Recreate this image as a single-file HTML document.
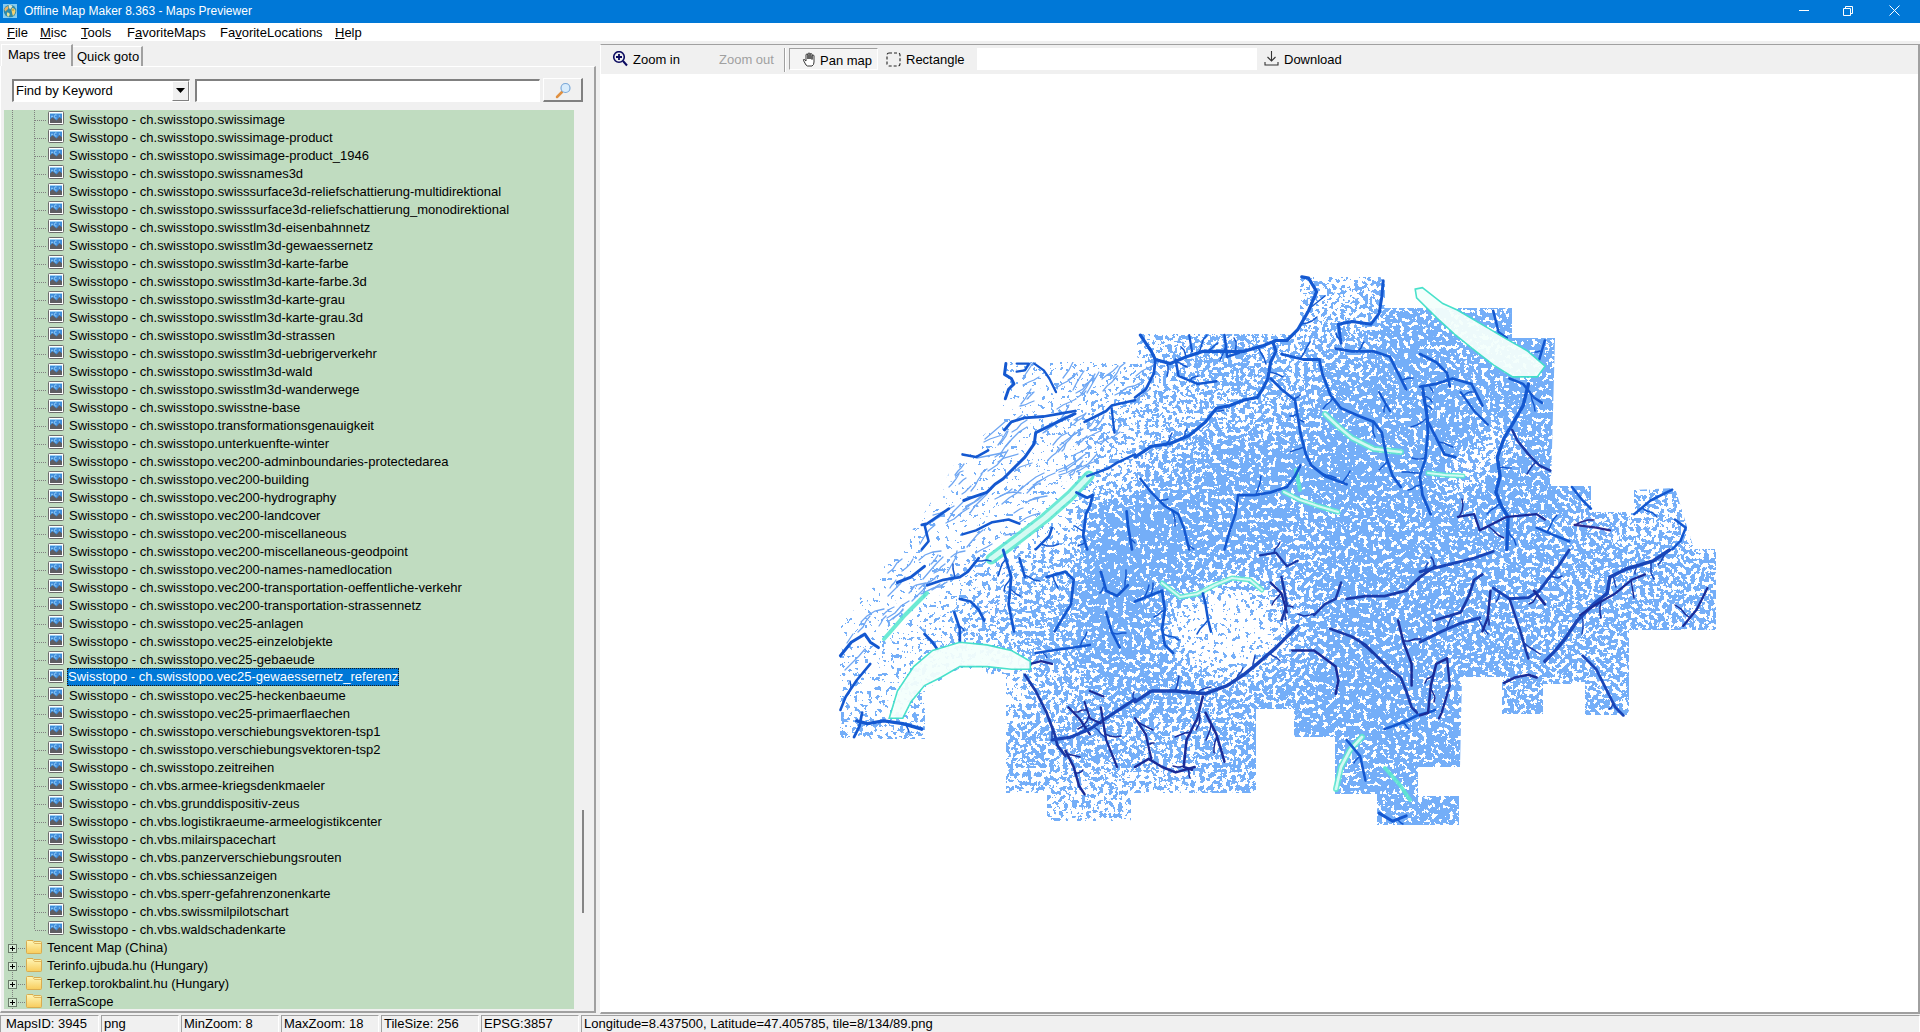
<!DOCTYPE html>
<html><head><meta charset="utf-8">
<style>
*{margin:0;padding:0;box-sizing:border-box}
html,body{width:1920px;height:1032px;overflow:hidden;background:#f0f0f0;font-family:"Liberation Sans",sans-serif;font-size:13px;color:#000}
.a{position:absolute}
#title{left:0;top:0;width:1920px;height:23px;background:#0078d7;color:#fff}
#title .tx{left:24px;top:4px;font-size:12px;white-space:nowrap}
#menu{left:0;top:23px;width:1920px;height:18px;background:#fff}
#menu span{position:absolute;top:2px;white-space:nowrap}
u{text-decoration:underline;text-underline-offset:1px;text-decoration-thickness:1px}
#tabs .tab{position:absolute;white-space:nowrap}
#tree{left:4px;top:110px;width:570px;height:899px;background:#c0dcc0;overflow:hidden}
.r{position:absolute;left:0;height:18px;width:570px}
.r .t{position:absolute;left:64px;top:1px;white-space:nowrap;font-size:13px;line-height:16px;padding:0 1px}
.r .t2{position:absolute;left:43px;top:1px;white-space:nowrap;font-size:13px;line-height:16px}
.r .t.sel{background:#0078d7;color:#fff;outline:1px dotted #1a1a1a;outline-offset:-1px;left:63px;top:-1px;line-height:18px;height:18px;padding:0 1px 0 1px}
.r .hd{position:absolute;left:31px;top:9px;width:12px;height:1px;background-image:linear-gradient(90deg,#808080 50%,transparent 50%);background-size:2px 1px}
.r .hd2{position:absolute;left:14px;top:9px;width:8px;height:1px;background-image:linear-gradient(90deg,#808080 50%,transparent 50%);background-size:2px 1px}
.r .ic{position:absolute;left:44px;top:0px;width:16px;height:14px}
.r .fo{position:absolute;left:22px;top:1px;width:16px;height:14px}
.r .pb{position:absolute;left:4px;top:5px;width:9px;height:9px}
.vd{position:absolute;width:1px;background-image:linear-gradient(180deg,#808080 50%,transparent 50%);background-size:1px 2px}
</style></head><body>
<svg width="0" height="0" style="position:absolute"><defs>
<symbol id="img" viewBox="0 0 16 14"><rect x="0.5" y="0.5" width="15" height="13" rx="1" fill="#fff" stroke="#6b6b6b"/><rect x="2" y="2" width="12" height="10" fill="#3f8cd8"/><rect x="2" y="2" width="12" height="1" fill="#9fd4f5"/><circle cx="4" cy="5.5" r="1" fill="#8ccaf8"/><path d="M8.5 4 A1.6 1.6 0 1 0 8.5 7" stroke="#a8dcff" stroke-width="1" fill="none"/><circle cx="11.5" cy="5" r="0.8" fill="#8ccaf8"/><path d="M2 12V8.5L4.5 6.3L8.5 9.5L11.5 6.3L14 8.3V12Z" fill="#5e5e62"/></symbol>
<symbol id="fold" viewBox="0 0 16 14"><path d="M0.5 1.5Q0.5 0.5 1.5 0.5H7L8 1.5H14.5Q15.5 1.5 15.5 2.5V12.5Q15.5 13.5 14.5 13.5H1.5Q0.5 13.5 0.5 12.5Z" fill="url(#fg)" stroke="#d8ac50"/><path d="M7 1.5L8.5 3.5H15" stroke="#e0b860" fill="none"/><defs><linearGradient id="fg" x1="0" y1="0" x2="0" y2="1"><stop offset="0" stop-color="#fff7b8"/><stop offset="1" stop-color="#f8cc5c"/></linearGradient></defs></symbol>
<symbol id="plus" viewBox="0 0 9 9"><rect x="0.5" y="0.5" width="8" height="8" fill="#d8ecd8" stroke="#6a7a6a"/><path d="M2 4.5h5M4.5 2v5" stroke="#000" stroke-width="1"/></symbol>
</defs></svg>
<div id="title" class="a">
 <svg class="a" style="left:3px;top:4px" width="14" height="14" viewBox="0 0 14 14"><rect width="14" height="14" fill="#86ccf2"/><circle cx="7" cy="7" r="6.3" fill="#2f8aa8"/><path d="M1.2 5.5 Q2 2.5 5 2 Q6 3.5 5 5 Q3.5 6 2.5 7.5 Z" fill="#e8b060"/><path d="M5.5 1.2 Q8 0.8 9.5 2 Q8.5 4 7 5.5 Q6 4 5.5 1.2Z" fill="#dfe8d0"/><path d="M9 4 Q12 4 12.5 7 Q12 10.5 10 12 Q9 9 8.8 7.5 Q8 6 9 4Z" fill="#f2d070"/><path d="M4 8.5 Q6.5 8 6.8 10.5 Q6 13 4.8 12.8 Q3.5 11 4 8.5Z" fill="#e8e098"/><circle cx="10" cy="6" r="0.8" fill="#a08830"/></svg>
 <div class="a tx">Offline Map Maker 8.363 - Maps Previewer</div>
 <svg class="a" style="left:1799px;top:10px" width="11" height="2"><rect width="10" height="1" fill="#fff"/></svg>
 <svg class="a" style="left:1843px;top:5px" width="12" height="11" viewBox="0 0 12 11"><path d="M0.5 3.5h7v7h-7z M2.5 3.5v-2h7v7h-2" fill="none" stroke="#fff"/></svg>
 <svg class="a" style="left:1889px;top:5px" width="11" height="11" viewBox="0 0 11 11"><path d="M0.5 0.5L10.5 10.5M10.5 0.5L0.5 10.5" stroke="#fff" stroke-width="1"/></svg>
</div>
<div id="menu" class="a">
 <span style="left:7px"><u>F</u>ile</span>
 <span style="left:40px"><u>M</u>isc</span>
 <span style="left:81px"><u>T</u>ools</span>
 <span style="left:127px">F<u>a</u>voriteMaps</span>
 <span style="left:220px">Fa<u>v</u>oriteLocations</span>
 <span style="left:335px"><u>H</u>elp</span>
</div>
<!-- LEFT PANEL -->
<div id="tabs">
 <div class="a" style="left:1px;top:44px;width:72px;height:24px;background:#f0f0f0;border-left:1px solid #fff;border-top:1px solid #fff;border-right:2px solid #a0a0a0"></div>
 <div class="a" style="left:73px;top:46px;width:70px;height:20px;border-top:1px solid #fff;border-right:2px solid #a0a0a0"></div>
 <div class="tab" style="left:8px;top:47px">Maps tree</div>
 <div class="tab" style="left:77px;top:49px">Quick goto</div>
 <!-- tab page frame -->
 <div class="a" style="left:0px;top:66px;width:596px;height:947px;border-top:1px solid #fff;border-left:1px solid #fff;border-right:2px solid #a0a0a0;border-bottom:2px solid #a0a0a0"></div>
 <div class="a" style="left:1px;top:66px;width:72px;height:2px;background:#f0f0f0"></div>
</div>
<!-- combobox -->
<div class="a" style="left:12px;top:79px;width:178px;height:23px;background:#fff;border-top:2px solid #808080;border-left:2px solid #808080;border-right:1px solid #fff;border-bottom:1px solid #fff"></div>
<div class="a" style="left:16px;top:83px;white-space:nowrap">Find by Keyword</div>
<div class="a" style="left:172px;top:81px;width:17px;height:20px;background:#f0f0f0;border-right:1px solid #808080;border-bottom:1px solid #808080;border-left:1px solid #fff;border-top:1px solid #fff"></div>
<svg class="a" style="left:176px;top:88px" width="9" height="5"><path d="M0 0h9L4.5 5z" fill="#000"/></svg>
<div class="a" style="left:195px;top:79px;width:345px;height:23px;background:#fff;border-top:2px solid #808080;border-left:2px solid #808080;border-right:1px solid #fff;border-bottom:1px solid #fff"></div>
<div class="a" style="left:543px;top:78px;width:40px;height:24px;background:#f0f0f0;border-top:1px solid #fff;border-left:1px solid #fff;border-right:2px solid #808080;border-bottom:2px solid #808080"></div>
<svg class="a" style="left:554px;top:81px" width="18" height="18" viewBox="0 0 18 18"><line x1="3" y1="16" x2="8" y2="11" stroke="#e09040" stroke-width="2.5" stroke-linecap="round"/><circle cx="11.5" cy="7" r="4.5" fill="#d8ecfc" stroke="#7aa8d8" stroke-width="1.2"/></svg>
<!-- tree -->
<div id="tree" class="a">
<div class="vd" style="left:8px;top:0;height:899px"></div>
<div class="vd" style="left:30px;top:0;height:820px"></div>
<div class="r" style="top:1px"><i class="hd"></i><svg class="ic"><use href="#img"/></svg><span class="t">Swisstopo - ch.swisstopo.swissimage</span></div>
<div class="r" style="top:19px"><i class="hd"></i><svg class="ic"><use href="#img"/></svg><span class="t">Swisstopo - ch.swisstopo.swissimage-product</span></div>
<div class="r" style="top:37px"><i class="hd"></i><svg class="ic"><use href="#img"/></svg><span class="t">Swisstopo - ch.swisstopo.swissimage-product_1946</span></div>
<div class="r" style="top:55px"><i class="hd"></i><svg class="ic"><use href="#img"/></svg><span class="t">Swisstopo - ch.swisstopo.swissnames3d</span></div>
<div class="r" style="top:73px"><i class="hd"></i><svg class="ic"><use href="#img"/></svg><span class="t">Swisstopo - ch.swisstopo.swisssurface3d-reliefschattierung-multidirektional</span></div>
<div class="r" style="top:91px"><i class="hd"></i><svg class="ic"><use href="#img"/></svg><span class="t">Swisstopo - ch.swisstopo.swisssurface3d-reliefschattierung_monodirektional</span></div>
<div class="r" style="top:109px"><i class="hd"></i><svg class="ic"><use href="#img"/></svg><span class="t">Swisstopo - ch.swisstopo.swisstlm3d-eisenbahnnetz</span></div>
<div class="r" style="top:127px"><i class="hd"></i><svg class="ic"><use href="#img"/></svg><span class="t">Swisstopo - ch.swisstopo.swisstlm3d-gewaessernetz</span></div>
<div class="r" style="top:145px"><i class="hd"></i><svg class="ic"><use href="#img"/></svg><span class="t">Swisstopo - ch.swisstopo.swisstlm3d-karte-farbe</span></div>
<div class="r" style="top:163px"><i class="hd"></i><svg class="ic"><use href="#img"/></svg><span class="t">Swisstopo - ch.swisstopo.swisstlm3d-karte-farbe.3d</span></div>
<div class="r" style="top:181px"><i class="hd"></i><svg class="ic"><use href="#img"/></svg><span class="t">Swisstopo - ch.swisstopo.swisstlm3d-karte-grau</span></div>
<div class="r" style="top:199px"><i class="hd"></i><svg class="ic"><use href="#img"/></svg><span class="t">Swisstopo - ch.swisstopo.swisstlm3d-karte-grau.3d</span></div>
<div class="r" style="top:217px"><i class="hd"></i><svg class="ic"><use href="#img"/></svg><span class="t">Swisstopo - ch.swisstopo.swisstlm3d-strassen</span></div>
<div class="r" style="top:235px"><i class="hd"></i><svg class="ic"><use href="#img"/></svg><span class="t">Swisstopo - ch.swisstopo.swisstlm3d-uebrigerverkehr</span></div>
<div class="r" style="top:253px"><i class="hd"></i><svg class="ic"><use href="#img"/></svg><span class="t">Swisstopo - ch.swisstopo.swisstlm3d-wald</span></div>
<div class="r" style="top:271px"><i class="hd"></i><svg class="ic"><use href="#img"/></svg><span class="t">Swisstopo - ch.swisstopo.swisstlm3d-wanderwege</span></div>
<div class="r" style="top:289px"><i class="hd"></i><svg class="ic"><use href="#img"/></svg><span class="t">Swisstopo - ch.swisstopo.swisstne-base</span></div>
<div class="r" style="top:307px"><i class="hd"></i><svg class="ic"><use href="#img"/></svg><span class="t">Swisstopo - ch.swisstopo.transformationsgenauigkeit</span></div>
<div class="r" style="top:325px"><i class="hd"></i><svg class="ic"><use href="#img"/></svg><span class="t">Swisstopo - ch.swisstopo.unterkuenfte-winter</span></div>
<div class="r" style="top:343px"><i class="hd"></i><svg class="ic"><use href="#img"/></svg><span class="t">Swisstopo - ch.swisstopo.vec200-adminboundaries-protectedarea</span></div>
<div class="r" style="top:361px"><i class="hd"></i><svg class="ic"><use href="#img"/></svg><span class="t">Swisstopo - ch.swisstopo.vec200-building</span></div>
<div class="r" style="top:379px"><i class="hd"></i><svg class="ic"><use href="#img"/></svg><span class="t">Swisstopo - ch.swisstopo.vec200-hydrography</span></div>
<div class="r" style="top:397px"><i class="hd"></i><svg class="ic"><use href="#img"/></svg><span class="t">Swisstopo - ch.swisstopo.vec200-landcover</span></div>
<div class="r" style="top:415px"><i class="hd"></i><svg class="ic"><use href="#img"/></svg><span class="t">Swisstopo - ch.swisstopo.vec200-miscellaneous</span></div>
<div class="r" style="top:433px"><i class="hd"></i><svg class="ic"><use href="#img"/></svg><span class="t">Swisstopo - ch.swisstopo.vec200-miscellaneous-geodpoint</span></div>
<div class="r" style="top:451px"><i class="hd"></i><svg class="ic"><use href="#img"/></svg><span class="t">Swisstopo - ch.swisstopo.vec200-names-namedlocation</span></div>
<div class="r" style="top:469px"><i class="hd"></i><svg class="ic"><use href="#img"/></svg><span class="t">Swisstopo - ch.swisstopo.vec200-transportation-oeffentliche-verkehr</span></div>
<div class="r" style="top:487px"><i class="hd"></i><svg class="ic"><use href="#img"/></svg><span class="t">Swisstopo - ch.swisstopo.vec200-transportation-strassennetz</span></div>
<div class="r" style="top:505px"><i class="hd"></i><svg class="ic"><use href="#img"/></svg><span class="t">Swisstopo - ch.swisstopo.vec25-anlagen</span></div>
<div class="r" style="top:523px"><i class="hd"></i><svg class="ic"><use href="#img"/></svg><span class="t">Swisstopo - ch.swisstopo.vec25-einzelobjekte</span></div>
<div class="r" style="top:541px"><i class="hd"></i><svg class="ic"><use href="#img"/></svg><span class="t">Swisstopo - ch.swisstopo.vec25-gebaeude</span></div>
<div class="r" style="top:559px"><i class="hd"></i><svg class="ic"><use href="#img"/></svg><span class="t sel">Swisstopo - ch.swisstopo.vec25-gewaessernetz_referenz</span></div>
<div class="r" style="top:577px"><i class="hd"></i><svg class="ic"><use href="#img"/></svg><span class="t">Swisstopo - ch.swisstopo.vec25-heckenbaeume</span></div>
<div class="r" style="top:595px"><i class="hd"></i><svg class="ic"><use href="#img"/></svg><span class="t">Swisstopo - ch.swisstopo.vec25-primaerflaechen</span></div>
<div class="r" style="top:613px"><i class="hd"></i><svg class="ic"><use href="#img"/></svg><span class="t">Swisstopo - ch.swisstopo.verschiebungsvektoren-tsp1</span></div>
<div class="r" style="top:631px"><i class="hd"></i><svg class="ic"><use href="#img"/></svg><span class="t">Swisstopo - ch.swisstopo.verschiebungsvektoren-tsp2</span></div>
<div class="r" style="top:649px"><i class="hd"></i><svg class="ic"><use href="#img"/></svg><span class="t">Swisstopo - ch.swisstopo.zeitreihen</span></div>
<div class="r" style="top:667px"><i class="hd"></i><svg class="ic"><use href="#img"/></svg><span class="t">Swisstopo - ch.vbs.armee-kriegsdenkmaeler</span></div>
<div class="r" style="top:685px"><i class="hd"></i><svg class="ic"><use href="#img"/></svg><span class="t">Swisstopo - ch.vbs.grunddispositiv-zeus</span></div>
<div class="r" style="top:703px"><i class="hd"></i><svg class="ic"><use href="#img"/></svg><span class="t">Swisstopo - ch.vbs.logistikraeume-armeelogistikcenter</span></div>
<div class="r" style="top:721px"><i class="hd"></i><svg class="ic"><use href="#img"/></svg><span class="t">Swisstopo - ch.vbs.milairspacechart</span></div>
<div class="r" style="top:739px"><i class="hd"></i><svg class="ic"><use href="#img"/></svg><span class="t">Swisstopo - ch.vbs.panzerverschiebungsrouten</span></div>
<div class="r" style="top:757px"><i class="hd"></i><svg class="ic"><use href="#img"/></svg><span class="t">Swisstopo - ch.vbs.schiessanzeigen</span></div>
<div class="r" style="top:775px"><i class="hd"></i><svg class="ic"><use href="#img"/></svg><span class="t">Swisstopo - ch.vbs.sperr-gefahrenzonenkarte</span></div>
<div class="r" style="top:793px"><i class="hd"></i><svg class="ic"><use href="#img"/></svg><span class="t">Swisstopo - ch.vbs.swissmilpilotschart</span></div>
<div class="r" style="top:811px"><i class="hd"></i><svg class="ic"><use href="#img"/></svg><span class="t">Swisstopo - ch.vbs.waldschadenkarte</span></div>
<div class="r" style="top:829px"><svg class="pb"><use href="#plus"/></svg><i class="hd2"></i><svg class="fo"><use href="#fold"/></svg><span class="t2">Tencent Map (China)</span></div>
<div class="r" style="top:847px"><svg class="pb"><use href="#plus"/></svg><i class="hd2"></i><svg class="fo"><use href="#fold"/></svg><span class="t2">Terinfo.ujbuda.hu (Hungary)</span></div>
<div class="r" style="top:865px"><svg class="pb"><use href="#plus"/></svg><i class="hd2"></i><svg class="fo"><use href="#fold"/></svg><span class="t2">Terkep.torokbalint.hu (Hungary)</span></div>
<div class="r" style="top:883px"><svg class="pb"><use href="#plus"/></svg><i class="hd2"></i><svg class="fo"><use href="#fold"/></svg><span class="t2">TerraScope</span></div>
</div>
<!-- scrollbar -->
<div class="a" style="left:582px;top:810px;width:2px;height:103px;background:#858585"></div>
<!-- <svg class="a" style="left:0;top:0" width="1920" height="1032" viewBox="0 0 1920 1032">
<defs><clipPath id="sil"><polygon points="1003,362 1137,362 1137,334 1300,334 1300,277 1385,277 1385,308 1512,308 1512,338 1555,338 1551,486 1591,486 1591,512 1634,512 1634,490 1675,488 1694,549 1716,549 1716,630 1629,630 1629,715 1585,715 1585,684 1543,684 1543,714 1502,714 1502,677 1462,677 1460,767 1418,767 1418,796 1459,796 1459,825 1377,825 1377,794 1335,794 1335,737 1294,737 1294,709 1256,709 1256,793 1131,793 1131,821 1047,821 1047,793 1006,793 1006,677 960,668 925,690 925,739 840,739 840,624 870,585 920,520 962,452 1003,420"/></clipPath>
<filter id="tex" filterUnits="userSpaceOnUse" x="700" y="200" width="1150" height="700" color-interpolation-filters="sRGB"><feColorMatrix in="SourceGraphic" type="matrix" values="0 0 0 0 0  0 0 0 0 0  0 0 0 0 0  1 0 0 0 0" result="src"/><feGaussianBlur in="src" stdDeviation="12" result="d"/><feTurbulence type="fractalNoise" baseFrequency="0.22" numOctaves="3" seed="5" result="n"/><feColorMatrix in="n" type="matrix" values="0 0 0 0 0  0 0 0 0 0  0 0 0 0 0  2.5 0 0 0 -0.75" result="na"/><feComposite in="d" in2="na" operator="arithmetic" k1="0" k2="1" k3="-1" k4="0.5" result="c"/><feComponentTransfer in="c" result="th"><feFuncA type="linear" slope="40" intercept="-20"/></feComponentTransfer><feFlood flood-color="#74aef8"/><feComposite in2="th" operator="in"/></filter></defs>
<g clip-path="url(#sil)"><g filter="url(#tex)">
<rect x="780" y="221" width="60" height="55" fill="#101010"/>
<rect x="840" y="221" width="60" height="55" fill="#101010"/>
<rect x="900" y="221" width="60" height="55" fill="#111111"/>
<rect x="960" y="221" width="60" height="55" fill="#111111"/>
<rect x="1020" y="221" width="60" height="55" fill="#171717"/>
<rect x="1080" y="221" width="60" height="55" fill="#393939"/>
<rect x="1140" y="221" width="60" height="55" fill="#666666"/>
<rect x="1200" y="221" width="60" height="55" fill="#7c7c7c"/>
<rect x="1260" y="221" width="60" height="55" fill="#636363"/>
<rect x="1320" y="221" width="60" height="55" fill="#6a6a6a"/>
<rect x="1380" y="221" width="60" height="55" fill="#b6b6b6"/>
<rect x="1440" y="221" width="60" height="55" fill="#b6b6b6"/>
<rect x="1500" y="221" width="60" height="55" fill="#959595"/>
<rect x="1560" y="221" width="60" height="55" fill="#aeaeae"/>
<rect x="1620" y="221" width="60" height="55" fill="#b7b7b7"/>
<rect x="1680" y="221" width="60" height="55" fill="#a9a9a9"/>
<rect x="1740" y="221" width="60" height="55" fill="#a9a9a9"/>
<rect x="780" y="276" width="60" height="55" fill="#101010"/>
<rect x="840" y="276" width="60" height="55" fill="#101010"/>
<rect x="900" y="276" width="60" height="55" fill="#111111"/>
<rect x="960" y="276" width="60" height="55" fill="#111111"/>
<rect x="1020" y="276" width="60" height="55" fill="#171717"/>
<rect x="1080" y="276" width="60" height="55" fill="#393939"/>
<rect x="1140" y="276" width="60" height="55" fill="#666666"/>
<rect x="1200" y="276" width="60" height="55" fill="#7c7c7c"/>
<rect x="1260" y="276" width="60" height="55" fill="#636363"/>
<rect x="1320" y="276" width="60" height="55" fill="#6a6a6a"/>
<rect x="1380" y="276" width="60" height="55" fill="#b6b6b6"/>
<rect x="1440" y="276" width="60" height="55" fill="#b6b6b6"/>
<rect x="1500" y="276" width="60" height="55" fill="#959595"/>
<rect x="1560" y="276" width="60" height="55" fill="#aeaeae"/>
<rect x="1620" y="276" width="60" height="55" fill="#b7b7b7"/>
<rect x="1680" y="276" width="60" height="55" fill="#a9a9a9"/>
<rect x="1740" y="276" width="60" height="55" fill="#a9a9a9"/>
<rect x="780" y="331" width="60" height="55" fill="#0a0a0a"/>
<rect x="840" y="331" width="60" height="55" fill="#0a0a0a"/>
<rect x="900" y="331" width="60" height="55" fill="#0f0f0f"/>
<rect x="960" y="331" width="60" height="55" fill="#111111"/>
<rect x="1020" y="331" width="60" height="55" fill="#111111"/>
<rect x="1080" y="331" width="60" height="55" fill="#242424"/>
<rect x="1140" y="331" width="60" height="55" fill="#747474"/>
<rect x="1200" y="331" width="60" height="55" fill="#959595"/>
<rect x="1260" y="331" width="60" height="55" fill="#858585"/>
<rect x="1320" y="331" width="60" height="55" fill="#a6a6a6"/>
<rect x="1380" y="331" width="60" height="55" fill="#d7d7d7"/>
<rect x="1440" y="331" width="60" height="55" fill="#a6a6a6"/>
<rect x="1500" y="331" width="60" height="55" fill="#c7c7c7"/>
<rect x="1560" y="331" width="60" height="55" fill="#bfbfbf"/>
<rect x="1620" y="331" width="60" height="55" fill="#acacac"/>
<rect x="1680" y="331" width="60" height="55" fill="#999999"/>
<rect x="1740" y="331" width="60" height="55" fill="#999999"/>
<rect x="780" y="386" width="60" height="55" fill="#000000"/>
<rect x="840" y="386" width="60" height="55" fill="#000000"/>
<rect x="900" y="386" width="60" height="55" fill="#0a0a0a"/>
<rect x="960" y="386" width="60" height="55" fill="#0e0e0e"/>
<rect x="1020" y="386" width="60" height="55" fill="#171717"/>
<rect x="1080" y="386" width="60" height="55" fill="#535353"/>
<rect x="1140" y="386" width="60" height="55" fill="#747474"/>
<rect x="1200" y="386" width="60" height="55" fill="#858585"/>
<rect x="1260" y="386" width="60" height="55" fill="#959595"/>
<rect x="1320" y="386" width="60" height="55" fill="#c7c7c7"/>
<rect x="1380" y="386" width="60" height="55" fill="#e6e6e6"/>
<rect x="1440" y="386" width="60" height="55" fill="#e6e6e6"/>
<rect x="1500" y="386" width="60" height="55" fill="#e1e1e1"/>
<rect x="1560" y="386" width="60" height="55" fill="#bcbcbc"/>
<rect x="1620" y="386" width="60" height="55" fill="#9d9d9d"/>
<rect x="1680" y="386" width="60" height="55" fill="#959595"/>
<rect x="1740" y="386" width="60" height="55" fill="#959595"/>
<rect x="780" y="441" width="60" height="55" fill="#040404"/>
<rect x="840" y="441" width="60" height="55" fill="#040404"/>
<rect x="900" y="441" width="60" height="55" fill="#000000"/>
<rect x="960" y="441" width="60" height="55" fill="#0b0b0b"/>
<rect x="1020" y="441" width="60" height="55" fill="#171717"/>
<rect x="1080" y="441" width="60" height="55" fill="#535353"/>
<rect x="1140" y="441" width="60" height="55" fill="#8b8b8b"/>
<rect x="1200" y="441" width="60" height="55" fill="#c7c7c7"/>
<rect x="1260" y="441" width="60" height="55" fill="#c7c7c7"/>
<rect x="1320" y="441" width="60" height="55" fill="#e1e1e1"/>
<rect x="1380" y="441" width="60" height="55" fill="#e6e6e6"/>
<rect x="1440" y="441" width="60" height="55" fill="#e1e1e1"/>
<rect x="1500" y="441" width="60" height="55" fill="#c7c7c7"/>
<rect x="1560" y="441" width="60" height="55" fill="#a6a6a6"/>
<rect x="1620" y="441" width="60" height="55" fill="#959595"/>
<rect x="1680" y="441" width="60" height="55" fill="#818181"/>
<rect x="1740" y="441" width="60" height="55" fill="#818181"/>
<rect x="780" y="496" width="60" height="55" fill="#0a0a0a"/>
<rect x="840" y="496" width="60" height="55" fill="#0a0a0a"/>
<rect x="900" y="496" width="60" height="55" fill="#080808"/>
<rect x="960" y="496" width="60" height="55" fill="#111111"/>
<rect x="1020" y="496" width="60" height="55" fill="#242424"/>
<rect x="1080" y="496" width="60" height="55" fill="#c7c7c7"/>
<rect x="1140" y="496" width="60" height="55" fill="#e6e6e6"/>
<rect x="1200" y="496" width="60" height="55" fill="#e6e6e6"/>
<rect x="1260" y="496" width="60" height="55" fill="#a6a6a6"/>
<rect x="1320" y="496" width="60" height="55" fill="#c0c0c0"/>
<rect x="1380" y="496" width="60" height="55" fill="#b6b6b6"/>
<rect x="1440" y="496" width="60" height="55" fill="#b6b6b6"/>
<rect x="1500" y="496" width="60" height="55" fill="#b6b6b6"/>
<rect x="1560" y="496" width="60" height="55" fill="#959595"/>
<rect x="1620" y="496" width="60" height="55" fill="#777777"/>
<rect x="1680" y="496" width="60" height="55" fill="#777777"/>
<rect x="1740" y="496" width="60" height="55" fill="#777777"/>
<rect x="780" y="551" width="60" height="55" fill="#050505"/>
<rect x="840" y="551" width="60" height="55" fill="#050505"/>
<rect x="900" y="551" width="60" height="55" fill="#1d1d1d"/>
<rect x="960" y="551" width="60" height="55" fill="#535353"/>
<rect x="1020" y="551" width="60" height="55" fill="#7e7e7e"/>
<rect x="1080" y="551" width="60" height="55" fill="#e1e1e1"/>
<rect x="1140" y="551" width="60" height="55" fill="#c7c7c7"/>
<rect x="1200" y="551" width="60" height="55" fill="#959595"/>
<rect x="1260" y="551" width="60" height="55" fill="#959595"/>
<rect x="1320" y="551" width="60" height="55" fill="#c0c0c0"/>
<rect x="1380" y="551" width="60" height="55" fill="#b6b6b6"/>
<rect x="1440" y="551" width="60" height="55" fill="#acacac"/>
<rect x="1500" y="551" width="60" height="55" fill="#a6a6a6"/>
<rect x="1560" y="551" width="60" height="55" fill="#9f9f9f"/>
<rect x="1620" y="551" width="60" height="55" fill="#989898"/>
<rect x="1680" y="551" width="60" height="55" fill="#959595"/>
<rect x="1740" y="551" width="60" height="55" fill="#959595"/>
<rect x="780" y="606" width="60" height="55" fill="#171717"/>
<rect x="840" y="606" width="60" height="55" fill="#171717"/>
<rect x="900" y="606" width="60" height="55" fill="#3a3a3a"/>
<rect x="960" y="606" width="60" height="55" fill="#747474"/>
<rect x="1020" y="606" width="60" height="55" fill="#959595"/>
<rect x="1080" y="606" width="60" height="55" fill="#cecece"/>
<rect x="1140" y="606" width="60" height="55" fill="#a6a6a6"/>
<rect x="1200" y="606" width="60" height="55" fill="#5d5d5d"/>
<rect x="1260" y="606" width="60" height="55" fill="#959595"/>
<rect x="1320" y="606" width="60" height="55" fill="#c0c0c0"/>
<rect x="1380" y="606" width="60" height="55" fill="#c0c0c0"/>
<rect x="1440" y="606" width="60" height="55" fill="#b3b3b3"/>
<rect x="1500" y="606" width="60" height="55" fill="#a6a6a6"/>
<rect x="1560" y="606" width="60" height="55" fill="#989898"/>
<rect x="1620" y="606" width="60" height="55" fill="#989898"/>
<rect x="1680" y="606" width="60" height="55" fill="#959595"/>
<rect x="1740" y="606" width="60" height="55" fill="#959595"/>
<rect x="780" y="661" width="60" height="55" fill="#2f2f2f"/>
<rect x="840" y="661" width="60" height="55" fill="#2f2f2f"/>
<rect x="900" y="661" width="60" height="55" fill="#5d5d5d"/>
<rect x="960" y="661" width="60" height="55" fill="#242424"/>
<rect x="1020" y="661" width="60" height="55" fill="#7e7e7e"/>
<rect x="1080" y="661" width="60" height="55" fill="#a6a6a6"/>
<rect x="1140" y="661" width="60" height="55" fill="#a6a6a6"/>
<rect x="1200" y="661" width="60" height="55" fill="#959595"/>
<rect x="1260" y="661" width="60" height="55" fill="#a6a6a6"/>
<rect x="1320" y="661" width="60" height="55" fill="#c7c7c7"/>
<rect x="1380" y="661" width="60" height="55" fill="#c0c0c0"/>
<rect x="1440" y="661" width="60" height="55" fill="#a6a6a6"/>
<rect x="1500" y="661" width="60" height="55" fill="#9f9f9f"/>
<rect x="1560" y="661" width="60" height="55" fill="#959595"/>
<rect x="1620" y="661" width="60" height="55" fill="#959595"/>
<rect x="1680" y="661" width="60" height="55" fill="#969696"/>
<rect x="1740" y="661" width="60" height="55" fill="#969696"/>
<rect x="780" y="716" width="60" height="55" fill="#636363"/>
<rect x="840" y="716" width="60" height="55" fill="#636363"/>
<rect x="900" y="716" width="60" height="55" fill="#636363"/>
<rect x="960" y="716" width="60" height="55" fill="#858585"/>
<rect x="1020" y="716" width="60" height="55" fill="#959595"/>
<rect x="1080" y="716" width="60" height="55" fill="#959595"/>
<rect x="1140" y="716" width="60" height="55" fill="#858585"/>
<rect x="1200" y="716" width="60" height="55" fill="#959595"/>
<rect x="1260" y="716" width="60" height="55" fill="#b6b6b6"/>
<rect x="1320" y="716" width="60" height="55" fill="#c7c7c7"/>
<rect x="1380" y="716" width="60" height="55" fill="#e6e6e6"/>
<rect x="1440" y="716" width="60" height="55" fill="#cecece"/>
<rect x="1500" y="716" width="60" height="55" fill="#acacac"/>
<rect x="1560" y="716" width="60" height="55" fill="#989898"/>
<rect x="1620" y="716" width="60" height="55" fill="#959595"/>
<rect x="1680" y="716" width="60" height="55" fill="#959595"/>
<rect x="1740" y="716" width="60" height="55" fill="#959595"/>
<rect x="780" y="771" width="60" height="55" fill="#636363"/>
<rect x="840" y="771" width="60" height="55" fill="#636363"/>
<rect x="900" y="771" width="60" height="55" fill="#707070"/>
<rect x="960" y="771" width="60" height="55" fill="#747474"/>
<rect x="1020" y="771" width="60" height="55" fill="#636363"/>
<rect x="1080" y="771" width="60" height="55" fill="#636363"/>
<rect x="1140" y="771" width="60" height="55" fill="#636363"/>
<rect x="1200" y="771" width="60" height="55" fill="#858585"/>
<rect x="1260" y="771" width="60" height="55" fill="#acacac"/>
<rect x="1320" y="771" width="60" height="55" fill="#c7c7c7"/>
<rect x="1380" y="771" width="60" height="55" fill="#d7d7d7"/>
<rect x="1440" y="771" width="60" height="55" fill="#b6b6b6"/>
<rect x="1500" y="771" width="60" height="55" fill="#c2c2c2"/>
<rect x="1560" y="771" width="60" height="55" fill="#a7a7a7"/>
<rect x="1620" y="771" width="60" height="55" fill="#969696"/>
<rect x="1680" y="771" width="60" height="55" fill="#959595"/>
<rect x="1740" y="771" width="60" height="55" fill="#959595"/>
<rect x="780" y="826" width="60" height="55" fill="#636363"/>
<rect x="840" y="826" width="60" height="55" fill="#636363"/>
<rect x="900" y="826" width="60" height="55" fill="#707070"/>
<rect x="960" y="826" width="60" height="55" fill="#747474"/>
<rect x="1020" y="826" width="60" height="55" fill="#636363"/>
<rect x="1080" y="826" width="60" height="55" fill="#636363"/>
<rect x="1140" y="826" width="60" height="55" fill="#636363"/>
<rect x="1200" y="826" width="60" height="55" fill="#858585"/>
<rect x="1260" y="826" width="60" height="55" fill="#acacac"/>
<rect x="1320" y="826" width="60" height="55" fill="#c7c7c7"/>
<rect x="1380" y="826" width="60" height="55" fill="#d7d7d7"/>
<rect x="1440" y="826" width="60" height="55" fill="#b6b6b6"/>
<rect x="1500" y="826" width="60" height="55" fill="#c2c2c2"/>
<rect x="1560" y="826" width="60" height="55" fill="#a7a7a7"/>
<rect x="1620" y="826" width="60" height="55" fill="#969696"/>
<rect x="1680" y="826" width="60" height="55" fill="#959595"/>
<rect x="1740" y="826" width="60" height="55" fill="#959595"/>
<polygon points="1169,478 1230,470 1285,492 1285,555 1240,565 1170,560" fill="#bdbdbd"/>
<polygon points="1379,384 1433,390 1440,470 1400,514 1370,500" fill="#bdbdbd"/>
<polygon points="1395,340 1470,350 1550,420 1550,470 1490,440 1440,420" fill="#b8b8b8"/>
<polygon points="1340,720 1455,720 1455,822 1380,822 1340,790" fill="#bdbdbd"/>
<polygon points="1174,600 1230,588 1275,605 1282,650 1250,674 1200,670 1168,640" fill="#242424"/>
<polygon points="1438,482 1498,428 1516,440 1456,494" fill="#1f1f1f"/>
</g></g>
<g fill="none" stroke="#6fa6f2" stroke-width="1.3" stroke-linecap="round" clip-path="url(#sil)">
<path d="M976 553 L981 550 L987 547 L992 544"/>
<path d="M1078 397 L1081 395 L1084 393 L1086 391"/>
<path d="M977 458 L987 456 L997 454 L1006 452"/>
<path d="M861 622 L867 616 L875 611 L884 609"/>
<path d="M1074 455 L1078 453 L1083 451 L1087 448"/>
<path d="M858 632 L863 627 L866 621 L870 616"/>
<path d="M1072 475 L1074 473 L1075 470 L1077 467"/>
<path d="M1020 490 L1028 483 L1036 477 L1044 473"/>
<path d="M912 601 L918 595 L924 589 L929 581"/>
<path d="M1056 388 L1062 384 L1068 381 L1073 377"/>
<path d="M1115 433 L1118 430 L1120 425 L1121 421"/>
<path d="M951 557 L955 554 L960 552 L965 551"/>
<path d="M845 670 L852 663 L859 656 L865 649"/>
<path d="M1059 472 L1062 471 L1065 470 L1068 469"/>
<path d="M1027 493 L1032 488 L1037 482 L1043 479"/>
<path d="M1014 513 L1017 511 L1020 509 L1023 508"/>
<path d="M984 442 L990 439 L996 437 L1002 435"/>
<path d="M1043 433 L1051 427 L1057 421 L1066 416"/>
<path d="M1015 471 L1020 467 L1026 465 L1032 463"/>
<path d="M988 471 L997 465 L1003 458 L1008 450"/>
<path d="M1102 379 L1107 375 L1113 371 L1118 366"/>
<path d="M847 643 L849 640 L851 637 L853 634"/>
<path d="M1045 432 L1048 429 L1050 425 L1052 422"/>
<path d="M1057 409 L1063 405 L1070 402 L1076 399"/>
<path d="M1035 434 L1043 430 L1051 427 L1059 422"/>
<path d="M1077 472 L1085 467 L1091 461 L1097 454"/>
<path d="M1083 386 L1086 384 L1089 382 L1092 380"/>
<path d="M998 462 L1004 458 L1011 456 L1018 454"/>
<path d="M1012 432 L1017 429 L1021 424 L1027 420"/>
<path d="M995 499 L1001 496 L1007 493 L1012 489"/>
<path d="M1002 504 L1009 498 L1017 493 L1023 486"/>
<path d="M879 626 L881 623 L883 619 L886 616"/>
<path d="M947 573 L951 566 L955 559 L957 551"/>
<path d="M971 491 L975 486 L978 480 L982 474"/>
<path d="M1097 443 L1105 440 L1113 437 L1120 432"/>
<path d="M1058 452 L1064 445 L1070 439 L1075 432"/>
<path d="M1131 404 L1137 399 L1144 394 L1150 389"/>
<path d="M1069 474 L1074 470 L1079 466 L1083 461"/>
<path d="M1029 501 L1035 498 L1041 497 L1047 496"/>
<path d="M947 579 L951 577 L955 576 L959 575"/>
<path d="M1000 496 L1007 493 L1014 492 L1021 493"/>
<path d="M1062 451 L1064 449 L1065 446 L1066 443"/>
<path d="M1005 535 L1012 534 L1019 533 L1025 534"/>
<path d="M1068 380 L1071 378 L1074 376 L1077 373"/>
<path d="M1023 385 L1029 382 L1034 380 L1039 377"/>
<path d="M926 584 L930 582 L934 579 L937 576"/>
<path d="M887 618 L895 613 L901 606 L909 601"/>
<path d="M1123 390 L1128 387 L1134 386 L1140 383"/>
<path d="M1021 404 L1025 399 L1028 394 L1031 389"/>
<path d="M919 560 L925 555 L933 552 L941 551"/>
<path d="M1060 445 L1068 439 L1075 434 L1083 429"/>
<path d="M921 594 L927 591 L934 588 L940 584"/>
<path d="M1027 399 L1029 397 L1031 395 L1034 392"/>
<path d="M1029 490 L1032 487 L1036 485 L1040 483"/>
<path d="M1071 436 L1075 434 L1078 432 L1082 429"/>
<path d="M1103 391 L1107 386 L1112 382 L1117 376"/>
<path d="M1073 390 L1076 384 L1080 377 L1084 371"/>
<path d="M1048 460 L1052 456 L1056 453 L1059 448"/>
<path d="M1081 467 L1086 465 L1091 463 L1096 461"/>
<path d="M949 487 L952 484 L956 479 L959 474"/>
<path d="M893 619 L896 616 L900 613 L903 609"/>
<path d="M1076 393 L1083 389 L1088 383 L1094 377"/>
<path d="M883 615 L886 612 L890 609 L894 607"/>
<path d="M966 506 L974 502 L980 497 L986 492"/>
<path d="M1073 425 L1077 421 L1082 418 L1086 413"/>
<path d="M1067 469 L1074 464 L1080 458 L1087 453"/>
<path d="M985 439 L992 433 L999 427 L1007 420"/>
<path d="M995 457 L1001 453 L1005 447 L1010 441"/>
<path d="M920 544 L924 537 L929 530 L935 525"/>
<path d="M1087 393 L1091 386 L1095 379 L1099 372"/>
<path d="M1115 395 L1119 393 L1122 391 L1126 389"/>
<path d="M932 522 L936 519 L941 516 L944 512"/>
<path d="M1053 445 L1057 440 L1061 436 L1067 433"/>
<path d="M902 571 L906 568 L910 564 L913 559"/>
<path d="M1059 475 L1066 473 L1072 470 L1079 468"/>
<path d="M1052 425 L1060 420 L1065 413 L1069 405"/>
<path d="M956 476 L958 474 L960 472 L963 471"/>
<path d="M1023 371 L1027 368 L1030 364 L1033 360"/>
<path d="M888 622 L893 618 L899 614 L903 610"/>
<path d="M1091 431 L1096 427 L1101 421 L1104 415"/>
<path d="M948 520 L953 512 L960 505 L967 498"/>
<path d="M1020 406 L1025 405 L1029 403 L1034 401"/>
<path d="M1089 427 L1091 425 L1093 422 L1095 419"/>
<path d="M932 590 L937 587 L942 585 L947 582"/>
<path d="M1011 423 L1015 421 L1018 418 L1022 415"/>
<path d="M1020 522 L1026 518 L1033 515 L1040 513"/>
<path d="M963 510 L970 505 L978 500 L985 494"/>
<path d="M931 564 L934 561 L936 558 L938 555"/>
<path d="M998 445 L1001 441 L1004 436 L1007 431"/>
<path d="M1082 439 L1088 437 L1094 434 L1100 431"/>
<path d="M959 484 L961 482 L963 480 L966 478"/>
<path d="M946 523 L954 519 L961 513 L969 508"/>
<path d="M1058 470 L1066 467 L1074 462 L1082 458"/>
<path d="M911 588 L916 585 L921 584 L926 583"/>
<path d="M923 579 L929 572 L936 564 L943 557"/>
<path d="M1081 394 L1086 388 L1090 381 L1095 374"/>
<path d="M1136 376 L1142 371 L1150 367 L1157 363"/>
<path d="M1033 485 L1040 481 L1048 476 L1055 473"/>
<path d="M1074 420 L1077 418 L1081 416 L1085 414"/>
<path d="M1077 444 L1081 442 L1084 439 L1087 436"/>
<path d="M970 513 L975 506 L981 500 L987 494"/>
<path d="M934 573 L938 571 L941 567 L945 564"/>
<path d="M888 596 L894 590 L900 584 L905 577"/>
<path d="M1063 378 L1069 370 L1073 362 L1077 354"/>
<path d="M1006 446 L1012 439 L1019 432 L1027 427"/>
<path d="M1023 378 L1027 372 L1031 366 L1035 360"/>
<path d="M933 515 L940 513 L947 510 L954 506"/>
<path d="M967 547 L972 541 L977 535 L983 530"/>
<path d="M962 494 L965 492 L968 489 L971 486"/>
<path d="M929 590 L933 588 L937 587 L942 587"/>
<path d="M1101 444 L1103 442 L1106 439 L1108 437"/>
<path d="M955 475 L958 471 L961 468 L964 464"/>
<path d="M890 588 L892 585 L894 583 L896 580"/>
<path d="M981 474 L983 472 L985 470 L987 469"/>
<path d="M919 589 L923 585 L929 582 L934 579"/>
<path d="M1026 503 L1030 500 L1035 499 L1039 498"/>
<path d="M1113 378 L1117 373 L1120 367 L1125 363"/>
<path d="M909 593 L911 591 L912 589 L914 587"/>
<path d="M888 573 L893 569 L897 563 L902 559"/>
<path d="M1000 444 L1003 440 L1006 436 L1008 431"/>
</g>
<g fill="none" stroke="#5de8d0" stroke-linecap="round" stroke-linejoin="round" opacity="0.9">
<path stroke-width="11" d="M991 559 L1015 541 L1045 518 L1070 496 L1089 476"/>
<path stroke-width="5" d="M1162 583 L1180 597 L1197 594 L1215 585 L1232 578 L1250 580 L1262 590"/>
<path stroke-width="5" d="M1284 492 L1300 500 L1318 506 L1338 512"/>
<path stroke-width="4" d="M1296 470 L1300 490"/>
<path stroke-width="6" d="M1325 414 L1340 428 L1352 438 L1374 449 L1401 452"/>
<path stroke-width="5" d="M1428 473 L1445 475 L1463 476"/>
<path stroke-width="6" d="M1362 737 L1350 750 L1341 767 L1336 789"/>
<path stroke-width="4" d="M1385 768 L1400 785 L1410 800"/>
<path stroke-width="4" d="M884 639 L905 615 L927 593"/>
</g>
<g fill="none" stroke="#f0fffa" stroke-linecap="round" stroke-linejoin="round" opacity="0.8">
<path stroke-width="5.0" d="M991 559 L1015 541 L1045 518 L1070 496 L1089 476"/>
<path stroke-width="2.2" d="M1162 583 L1180 597 L1197 594 L1215 585 L1232 578 L1250 580 L1262 590"/>
<path stroke-width="2.2" d="M1284 492 L1300 500 L1318 506 L1338 512"/>
<path stroke-width="2.7" d="M1325 414 L1340 428 L1352 438 L1374 449 L1401 452"/>
<path stroke-width="2.2" d="M1428 473 L1445 475 L1463 476"/>
<path stroke-width="2.7" d="M1362 737 L1350 750 L1341 767 L1336 789"/>
</g>
<g fill="none" stroke-linecap="round" stroke-linejoin="round" stroke-width="1.5">
<path stroke="#1458d0" d="M1084 531 L1081 530 L1078 528 L1075 526"/>
<path stroke="#1458d0" d="M1085 542 L1083 544 L1080 545 L1078 546"/>
<path stroke="#1458d0" d="M1130 539 L1132 540 L1134 542 L1135 543"/>
<path stroke="#1458d0" d="M1041 544 L1047 546 L1053 546 L1059 544"/>
<path stroke="#1458d0" d="M1167 363 L1168 367 L1168 372 L1167 376"/>
<path stroke="#1458d0" d="M1186 357 L1185 353 L1184 350 L1181 347"/>
<path stroke="#1458d0" d="M1199 353 L1201 347 L1203 340 L1207 335"/>
<path stroke="#1458d0" d="M1207 351 L1211 349 L1214 346 L1218 343"/>
<path stroke="#1458d0" d="M1235 351 L1236 347 L1236 342 L1234 338"/>
<path stroke="#1458d0" d="M1258 347 L1261 353 L1264 358 L1266 364"/>
<path stroke="#1458d0" d="M1301 324 L1307 323 L1312 321 L1317 317"/>
<path stroke="#1458d0" d="M1310 308 L1315 304 L1320 300 L1325 296"/>
<path stroke="#1458d0" d="M1166 444 L1169 441 L1170 437 L1172 433"/>
<path stroke="#1458d0" d="M1183 438 L1185 435 L1185 432 L1187 429"/>
<path stroke="#1458d0" d="M1214 411 L1217 411 L1221 411 L1224 410"/>
<path stroke="#1458d0" d="M1269 372 L1274 373 L1279 375 L1283 377"/>
<path stroke="#1458d0" d="M1294 399 L1296 398 L1298 397 L1300 395"/>
<path stroke="#1458d0" d="M1297 414 L1295 415 L1293 416 L1290 416"/>
<path stroke="#1458d0" d="M1298 418 L1300 420 L1302 421 L1304 422"/>
<path stroke="#1458d0" d="M1304 447 L1299 449 L1295 450 L1290 452"/>
<path stroke="#1458d0" d="M1321 473 L1326 475 L1331 476 L1336 478"/>
<path stroke="#1458d0" d="M1342 483 L1345 479 L1348 475 L1350 471"/>
<path stroke="#1458d0" d="M1300 359 L1304 353 L1307 347 L1310 342"/>
<path stroke="#1458d0" d="M1333 398 L1330 402 L1326 405 L1323 409"/>
<path stroke="#1458d0" d="M1373 421 L1373 427 L1373 432 L1375 437"/>
<path stroke="#1458d0" d="M1388 461 L1385 464 L1382 467 L1379 470"/>
<path stroke="#1458d0" d="M1358 351 L1361 348 L1362 345 L1364 342"/>
<path stroke="#1458d0" d="M1402 380 L1405 379 L1409 378 L1413 378"/>
<path stroke="#1458d0" d="M1341 342 L1339 339 L1337 336 L1336 333"/>
<path stroke="#1458d0" d="M1160 501 L1162 500 L1165 500 L1168 499"/>
<path stroke="#1458d0" d="M1172 510 L1174 515 L1175 520 L1175 526"/>
<path stroke="#1458d0" d="M1188 545 L1190 546 L1192 548 L1194 549"/>
<path stroke="#1458d0" d="M1256 495 L1258 489 L1260 483 L1261 476"/>
<path stroke="#1458d0" d="M1425 405 L1428 406 L1430 407 L1432 409"/>
<path stroke="#1458d0" d="M1425 458 L1421 459 L1416 459 L1412 458"/>
<path stroke="#1458d0" d="M1421 473 L1415 473 L1408 472 L1402 472"/>
<path stroke="#1458d0" d="M1421 485 L1416 486 L1412 489 L1408 490"/>
<path stroke="#1458d0" d="M1176 362 L1180 363 L1183 365 L1187 367"/>
<path stroke="#1458d0" d="M1190 381 L1192 378 L1195 377 L1198 376"/>
<path stroke="#1458d0" d="M1226 346 L1224 351 L1222 356 L1220 360"/>
<path stroke="#1458d0" d="M1386 404 L1385 406 L1384 409 L1384 412"/>
<path stroke="#1458d0" d="M1499 468 L1503 467 L1507 468 L1511 468"/>
<path stroke="#1458d0" d="M1500 503 L1496 507 L1491 510 L1487 514"/>
<path stroke="#1458d0" d="M1508 529 L1510 535 L1514 539 L1516 545"/>
<path stroke="#1a3aa8" d="M1536 462 L1533 465 L1530 469 L1527 474"/>
<path stroke="#1458d0" d="M1429 385 L1430 387 L1432 390 L1433 392"/>
<path stroke="#1458d0" d="M1427 418 L1422 422 L1417 425 L1411 427"/>
<path stroke="#1458d0" d="M1423 396 L1427 397 L1430 399 L1432 402"/>
<path stroke="#1458d0" d="M1438 442 L1444 443 L1448 445 L1453 447"/>
<path stroke="#1458d0" d="M1542 351 L1540 351 L1537 352 L1535 352"/>
<path stroke="#1a2c98" d="M1459 517 L1462 511 L1463 505 L1462 499"/>
<path stroke="#1a2c98" d="M1488 526 L1493 530 L1498 535 L1504 538"/>
<path stroke="#1458d0" d="M1642 508 L1647 511 L1653 513 L1657 517"/>
<path stroke="#2a2a90" d="M1575 525 L1581 522 L1588 520 L1594 520"/>
<path stroke="#1458d0" d="M1547 532 L1550 527 L1553 520 L1557 515"/>
<path stroke="#1458d0" d="M1531 394 L1532 400 L1534 405 L1535 411"/>
<path stroke="#1458d0" d="M1463 396 L1467 393 L1470 392 L1474 392"/>
<path stroke="#1458d0" d="M845 698 L849 693 L851 687 L850 681"/>
<path stroke="#1458d0" d="M955 578 L954 573 L953 569 L953 564"/>
<path stroke="#1458d0" d="M977 561 L982 561 L986 560 L991 561"/>
<path stroke="#1458d0" d="M959 626 L961 627 L963 629 L964 631"/>
<path stroke="#1458d0" d="M1011 576 L1009 581 L1005 586 L1004 591"/>
<path stroke="#1458d0" d="M1006 559 L1002 564 L1000 570 L998 576"/>
<path stroke="#1458d0" d="M1010 589 L1013 591 L1016 594 L1020 596"/>
<path stroke="#1458d0" d="M1024 575 L1029 577 L1034 580 L1040 581"/>
<path stroke="#1458d0" d="M906 724 L907 727 L908 729 L909 732"/>
<path stroke="#1a3aa8" d="M1053 730 L1052 732 L1052 735 L1052 738"/>
<path stroke="#1a2c98" d="M1073 712 L1078 712 L1082 710 L1087 710"/>
<path stroke="#1a46b8" d="M1081 733 L1084 730 L1086 727 L1089 725"/>
<path stroke="#1a46b8" d="M1094 727 L1098 730 L1101 734 L1105 737"/>
<path stroke="#1a46b8" d="M1134 700 L1133 697 L1133 695 L1134 692"/>
<path stroke="#1a2c98" d="M1067 754 L1072 755 L1076 756 L1080 757"/>
<path stroke="#1a2c98" d="M1075 773 L1078 773 L1081 772 L1083 770"/>
<path stroke="#1a2c98" d="M1105 734 L1110 736 L1116 737 L1121 736"/>
<path stroke="#1458d0" d="M1105 586 L1103 588 L1102 591 L1100 593"/>
<path stroke="#1458d0" d="M1125 588 L1125 582 L1126 576 L1126 570"/>
<path stroke="#1458d0" d="M1053 575 L1054 580 L1056 584 L1058 588"/>
<path stroke="#1458d0" d="M1043 652 L1044 654 L1046 656 L1047 658"/>
<path stroke="#1458d0" d="M1080 647 L1082 641 L1085 637 L1087 632"/>
<path stroke="#1458d0" d="M1112 633 L1117 634 L1122 633 L1126 633"/>
<path stroke="#1a2c98" d="M1089 716 L1087 721 L1083 726 L1078 729"/>
<path stroke="#1a46b8" d="M1175 691 L1177 686 L1178 681 L1179 676"/>
<path stroke="#1a46b8" d="M1197 693 L1201 690 L1206 688 L1211 687"/>
<path stroke="#1a46b8" d="M1237 679 L1238 675 L1241 672 L1243 668"/>
<path stroke="#1a46b8" d="M1253 667 L1253 664 L1254 660 L1255 656"/>
<path stroke="#1a46b8" d="M1269 653 L1273 656 L1277 658 L1280 661"/>
<path stroke="#1458d0" d="M1144 598 L1146 594 L1148 589 L1149 585"/>
<path stroke="#1458d0" d="M1151 595 L1152 591 L1153 587 L1153 583"/>
<path stroke="#1458d0" d="M1165 610 L1161 612 L1158 615 L1154 617"/>
<path stroke="#1458d0" d="M1163 634 L1168 636 L1174 637 L1179 640"/>
<path stroke="#1458d0" d="M1208 620 L1204 625 L1200 629 L1197 634"/>
<path stroke="#1a3aa8" d="M1285 609 L1285 613 L1285 616 L1286 620"/>
<path stroke="#1a3aa8" d="M1360 642 L1364 646 L1368 649 L1372 653"/>
<path stroke="#1458d0" d="M1402 723 L1405 724 L1407 727 L1409 729"/>
<path stroke="#1a3aa8" d="M1316 613 L1310 615 L1304 616 L1298 614"/>
<path stroke="#1a3aa8" d="M1417 580 L1419 580 L1420 578 L1422 576"/>
<path stroke="#1a3aa8" d="M1434 567 L1434 564 L1433 560 L1431 557"/>
<path stroke="#1a2c98" d="M1403 641 L1409 641 L1415 639 L1421 639"/>
<path stroke="#1a2c98" d="M1199 711 L1200 718 L1199 724 L1196 730"/>
<path stroke="#1a2c98" d="M1191 732 L1185 733 L1180 735 L1175 737"/>
<path stroke="#1a2c98" d="M1184 766 L1180 767 L1177 767 L1173 766"/>
<path stroke="#1a2c98" d="M1211 725 L1210 730 L1208 735 L1206 740"/>
<path stroke="#1a2c98" d="M1217 737 L1215 742 L1214 748 L1214 753"/>
<path stroke="#1a2c98" d="M1188 769 L1189 772 L1189 775 L1190 778"/>
<path stroke="#1a2c98" d="M1136 720 L1141 724 L1147 727 L1153 730"/>
<path stroke="#1a2c98" d="M1148 744 L1150 744 L1152 743 L1154 743"/>
<path stroke="#1a3aa8" d="M1274 553 L1275 549 L1278 546 L1280 542"/>
<path stroke="#1a2c98" d="M1281 593 L1278 597 L1274 601 L1272 605"/>
<path stroke="#1a2c98" d="M1285 606 L1288 606 L1290 606 L1293 607"/>
<path stroke="#1458d0" d="M1360 756 L1358 758 L1355 761 L1354 763"/>
<path stroke="#1458d0" d="M1397 819 L1399 821 L1401 823 L1403 824"/>
<path stroke="#1a46b8" d="M1666 552 L1664 556 L1661 561 L1658 565"/>
<path stroke="#1a46b8" d="M1651 561 L1651 567 L1651 573 L1654 579"/>
<path stroke="#1a46b8" d="M1636 566 L1636 569 L1635 571 L1635 574"/>
<path stroke="#1a46b8" d="M1613 575 L1614 579 L1615 584 L1616 587"/>
<path stroke="#1a46b8" d="M1607 592 L1603 597 L1600 602 L1596 607"/>
<path stroke="#1a46b8" d="M1582 616 L1583 622 L1583 628 L1582 634"/>
<path stroke="#1a2c98" d="M1631 580 L1632 586 L1633 592 L1634 598"/>
<path stroke="#1a2c98" d="M1601 602 L1600 607 L1600 613 L1601 618"/>
<path stroke="#1a46b8" d="M1424 571 L1426 568 L1426 566 L1428 563"/>
<path stroke="#1a46b8" d="M1446 630 L1448 625 L1450 620 L1453 615"/>
<path stroke="#1a46b8" d="M1478 618 L1481 624 L1484 629 L1488 634"/>
<path stroke="#1a46b8" d="M1500 592 L1499 596 L1498 599 L1496 602"/>
<path stroke="#1a46b8" d="M1551 576 L1554 577 L1558 578 L1562 576"/>
<path stroke="#1a3aa8" d="M1524 643 L1529 647 L1534 650 L1540 654"/>
<path stroke="#1a2c98" d="M1488 618 L1489 620 L1489 623 L1489 625"/>
<path stroke="#1a2c98" d="M1434 674 L1431 677 L1427 679 L1425 683"/>
<path stroke="#1a2c98" d="M1431 689 L1433 693 L1435 697 L1434 702"/>
<path stroke="#1a46b8" d="M1613 703 L1612 706 L1611 708 L1609 709"/>
<path stroke="#1a2c98" d="M1690 618 L1685 614 L1681 609 L1675 605"/>
<path stroke="#1a2c98" d="M1537 595 L1535 599 L1533 602 L1529 604"/>
</g>
<g fill="none" stroke-linejoin="round" stroke-linecap="round">
<path d="M1005.9 363.6 L1004.5 374.4 L1011.3 378.5 L1014.0 383.9 L1008.6 389.3 L1005.3 398.8" stroke="#1458d0" stroke-width="2.99"/>
<path d="M1016.7 363.6 L1028.9 363.6 L1024.9 370.4 L1016.7 371.7" stroke="#1458d0" stroke-width="2.30"/>
<path d="M1034.3 363.6 L1043.8 370.4 L1049.3 378.5 L1056.0 392.1" stroke="#1458d0" stroke-width="2.30"/>
<path d="M1004.5 430.0 L1011.3 421.9 L1024.9 417.8 L1043.8 416.5 L1060.1 413.7 L1075.0 411.0" stroke="#1458d0" stroke-width="2.76"/>
<path d="M1075.0 413.7 L1052.0 424.6 L1035.7 432.7 L1034.3 443.6 L1024.9 457.1 L1016.7 465.3 L1003.2 478.8 L995.0 484.3 L986.9 492.4 L970.6 497.8 L963.8 500.5" stroke="#1458d0" stroke-width="2.99"/>
<path d="M962.5 454.4 L976.0 457.1 L988.2 450.4" stroke="#1458d0" stroke-width="2.53"/>
<path d="M921.8 524.9 L927.2 523.6 L948.9 508.7" stroke="#1458d0" stroke-width="2.76"/>
<path d="M924.5 524.9 L928.6 541.2 L921.8 549.4" stroke="#1458d0" stroke-width="2.53"/>
<path d="M962.5 534.4 L976.0 530.4 L992.3 522.2 L1008.6 519.5 L1019.4 523.6" stroke="#1458d0" stroke-width="2.53"/>
<path d="M1084.5 421.9 L1095.4 416.5 L1106.2 411.0 L1111.6 405.6 L1122.5 402.9 L1135.0 400.2" stroke="#1458d0" stroke-width="2.53"/>
<path d="M1111.6 408.3 L1114.4 432.7" stroke="#1458d0" stroke-width="2.30"/>
<path d="M1087.2 476.1 L1098.1 472.1 L1108.9 468.0 L1117.1 462.6 L1135.0 454.4" stroke="#1458d0" stroke-width="2.53"/>
<path d="M1076.4 492.4 L1087.2 497.8 L1092.7 495.1 L1089.9 506.0 L1085.9 514.1 L1083.2 535.8 L1087.2 549.4" stroke="#1458d0" stroke-width="2.76"/>
<path d="M1126.6 511.4 L1127.9 524.9 L1132.0 549.4" stroke="#1458d0" stroke-width="2.76"/>
<path d="M1035.7 549.4 L1049.3 535.8 L1052.0 527.7" stroke="#1458d0" stroke-width="2.53"/>
<path d="M1140.4 335.1 L1151.3 351.4 L1155.3 359.5 L1170.3 363.6 L1186.5 356.8 L1202.8 351.4 L1224.5 351.4 L1243.5 351.4 L1262.5 345.9 L1276.0 340.5 L1286.9 340.5 L1297.7 329.7 L1308.6 310.7 L1316.7 291.7 L1308.6 278.1 L1301.8 276.8" stroke="#1458d0" stroke-width="3.22"/>
<path d="M1155.3 359.5 L1154.0 373.1 L1145.8 389.3 L1135.0 397.5" stroke="#1458d0" stroke-width="2.76"/>
<path d="M1135.0 457.1 L1151.3 446.3 L1170.3 443.6 L1189.2 435.4 L1205.5 421.9 L1216.4 408.3 L1229.9 405.6 L1243.5 400.2 L1257.1 397.5 L1262.5 389.3 L1267.9 378.5 L1270.6 362.2 L1276.0 351.4 L1273.3 343.2" stroke="#1458d0" stroke-width="3.22"/>
<path d="M1270.6 378.5 L1281.5 389.3 L1295.0 400.2 L1297.7 416.5 L1300.4 432.7 L1305.9 454.4 L1311.3 465.3 L1324.9 476.1 L1346.6 484.3" stroke="#1458d0" stroke-width="2.76"/>
<path d="M1281.5 354.1 L1303.2 359.5 L1319.4 359.5 L1322.1 373.1 L1330.3 394.8 L1341.1 408.3 L1360.1 416.5 L1373.7 421.9 L1381.8 432.7 L1384.5 446.3 L1387.2 459.9 L1392.7 476.1 L1400.8 487.0" stroke="#1458d0" stroke-width="2.76"/>
<path d="M1335.7 348.7 L1352.0 351.4 L1373.7 351.4 L1389.9 356.8 L1398.1 373.1 L1406.2 389.3" stroke="#1458d0" stroke-width="2.76"/>
<path d="M1341.1 343.2 L1338.4 324.2 L1352.0 321.5 L1371.0 324.2 L1379.1 313.4 L1381.8 297.1 L1383.2 280.8" stroke="#1458d0" stroke-width="2.99"/>
<path d="M1140.4 478.8 L1151.3 492.4 L1164.8 506.0 L1178.4 514.1 L1183.8 527.7 L1189.2 549.4" stroke="#1458d0" stroke-width="2.53"/>
<path d="M1238.1 495.1 L1254.3 495.1 L1270.6 492.4 L1286.9 487.0 L1295.0 476.1 L1300.4 465.3" stroke="#1458d0" stroke-width="2.76"/>
<path d="M1238.1 495.1 L1235.4 514.1 L1229.9 530.4 L1224.5 549.4" stroke="#1458d0" stroke-width="2.53"/>
<path d="M1422.5 386.6 L1426.6 411.0 L1427.9 432.7 L1425.2 459.9 L1419.8 476.1 L1422.5 495.1 L1430.6 514.1" stroke="#1458d0" stroke-width="2.76"/>
<path d="M1175.7 359.5 L1178.4 375.8 L1197.4 383.9 L1216.4 381.2" stroke="#1458d0" stroke-width="2.53"/>
<path d="M1189.2 335.1 L1192.0 351.4" stroke="#1458d0" stroke-width="2.30"/>
<path d="M1224.5 335.1 L1227.2 356.8 L1243.5 351.4" stroke="#1458d0" stroke-width="2.53"/>
<path d="M1379.1 392.1 L1389.9 411.0" stroke="#1458d0" stroke-width="2.30"/>
<path d="M1528.5 383.9 L1523.1 405.6 L1512.2 424.6 L1504.1 438.2 L1497.3 457.1 L1500.0 476.1 L1495.9 492.4 L1501.4 506.0 L1508.1 516.8 L1506.8 549.4" stroke="#1458d0" stroke-width="3.45"/>
<path d="M1512.2 430.0 L1517.6 440.9 L1528.5 454.4 L1539.3 465.3 L1550.2 470.7" stroke="#1a3aa8" stroke-width="2.53"/>
<path d="M1420.0 386.6 L1436.3 383.9 L1452.5 378.5 L1471.5 383.9 L1482.4 405.6" stroke="#1458d0" stroke-width="2.76"/>
<path d="M1422.7 392.1 L1428.1 421.9 L1436.3 438.2 L1444.4 454.4 L1455.3 457.1" stroke="#1458d0" stroke-width="2.76"/>
<path d="M1420.0 354.1 L1436.3 362.2 L1447.1 373.1 L1449.8 386.6" stroke="#1458d0" stroke-width="2.76"/>
<path d="M1493.2 310.7 L1498.7 332.4 L1506.8 337.8" stroke="#1458d0" stroke-width="2.53"/>
<path d="M1544.8 340.5 L1539.3 359.5" stroke="#1458d0" stroke-width="2.53"/>
<path d="M1458.0 516.8 L1474.2 514.1 L1479.7 530.4 L1506.8 516.8 L1536.6 514.1 L1544.8 519.5" stroke="#1a2c98" stroke-width="2.30"/>
<path d="M1571.9 487.0 L1582.7 500.5 L1590.9 508.7" stroke="#1458d0" stroke-width="2.53"/>
<path d="M1634.3 514.1 L1650.5 500.5 L1672.2 489.7" stroke="#1458d0" stroke-width="2.53"/>
<path d="M1574.6 524.9 L1596.3 527.7 L1609.9 530.4" stroke="#2a2a90" stroke-width="2.30"/>
<path d="M1536.6 527.7 L1555.6 535.8 L1569.2 541.2" stroke="#1458d0" stroke-width="2.53"/>
<path d="M1674.9 519.5 L1685.8 527.7 L1680.4 541.2 L1672.2 549.4" stroke="#1458d0" stroke-width="2.53"/>
<path d="M1509.5 378.5 L1523.1 383.9 L1533.9 397.5 L1542.1 402.9" stroke="#1458d0" stroke-width="2.53"/>
<path d="M1460.7 392.1 L1474.2 411.0 L1487.8 424.6" stroke="#1458d0" stroke-width="2.30"/>
<path d="M840.4 655.8 L851.3 642.2 L864.8 634.1 L870.3 642.2 L878.4 647.6" stroke="#1458d0" stroke-width="2.99"/>
<path d="M840.4 710.0 L845.8 696.5 L856.7 680.2 L870.3 663.9" stroke="#1458d0" stroke-width="2.53"/>
<path d="M897.4 582.5 L910.9 577.1 L924.5 566.3" stroke="#1458d0" stroke-width="2.99"/>
<path d="M927.2 585.3 L943.5 579.8 L959.8 577.1 L967.9 571.7 L978.7 558.1" stroke="#1458d0" stroke-width="2.76"/>
<path d="M959.8 598.8 L970.6 601.5 L978.7 609.7 L984.2 620.5" stroke="#1458d0" stroke-width="2.76"/>
<path d="M954.3 612.4 L959.8 628.7 L959.8 642.2" stroke="#1458d0" stroke-width="2.76"/>
<path d="M1003.2 550.0 L1011.3 577.1 L1008.6 604.2 L1014.0 631.4" stroke="#1458d0" stroke-width="2.76"/>
<path d="M1019.4 558.1 L1024.9 577.1" stroke="#1458d0" stroke-width="2.53"/>
<path d="M924.5 634.1 L932.6 642.2 L938.1 650.4" stroke="#1458d0" stroke-width="2.76"/>
<path d="M856.7 720.9 L867.5 723.6 L883.8 720.9 L902.8 723.6 L921.8 729.0" stroke="#1458d0" stroke-width="3.45"/>
<path d="M862.1 712.7 L859.4 726.3 L854.0 737.1" stroke="#1458d0" stroke-width="2.76"/>
<path d="M1024.9 674.8 L1035.7 691.0 L1046.6 712.7 L1054.7 734.4 L1057.4 745.3 L1065.5 756.1" stroke="#1a3aa8" stroke-width="2.76"/>
<path d="M1030.3 663.9 L1041.1 661.2 L1052.0 663.9" stroke="#1a2c98" stroke-width="2.30"/>
<path d="M1068.3 707.3 L1079.1 718.2 L1089.9 734.4" stroke="#1a2c98" stroke-width="2.30"/>
<path d="M1052.0 739.9 L1071.0 737.1 L1089.9 729.0 L1106.2 718.2 L1122.5 707.3 L1135.0 699.2" stroke="#1a46b8" stroke-width="3.22"/>
<path d="M1065.5 750.7 L1073.7 767.0 L1079.1 786.0 L1084.5 794.1" stroke="#1a2c98" stroke-width="2.53"/>
<path d="M1100.8 707.3 L1106.2 739.9 L1117.1 767.0" stroke="#1a2c98" stroke-width="2.30"/>
<path d="M1089.9 691.0 L1103.5 696.5" stroke="#1a2c98" stroke-width="2.30"/>
<path d="M1100.8 571.7 L1106.2 590.7 L1117.1 596.1 L1127.9 585.3" stroke="#1458d0" stroke-width="2.76"/>
<path d="M1046.6 577.1 L1065.5 571.7 L1073.7 579.8 L1071.0 604.2 L1062.8 617.8 L1054.7 631.4" stroke="#1458d0" stroke-width="2.76"/>
<path d="M1035.7 653.1 L1052.0 650.4 L1073.7 647.6 L1089.9 644.9" stroke="#1458d0" stroke-width="2.53"/>
<path d="M1106.2 612.4 L1111.6 631.4 L1119.8 647.6" stroke="#1458d0" stroke-width="2.53"/>
<path d="M1084.5 701.9 L1089.9 718.2 L1100.8 723.6" stroke="#1a2c98" stroke-width="2.07"/>
<path d="M1135.0 701.9 L1151.3 691.0 L1175.7 691.0 L1205.5 693.7 L1227.2 685.6 L1243.5 674.8 L1257.1 663.9 L1276.0 647.6 L1292.3 631.4 L1297.7 625.9" stroke="#1a46b8" stroke-width="3.45"/>
<path d="M1135.0 601.5 L1148.6 596.1 L1162.1 590.7 L1164.8 609.7 L1162.1 628.7 L1164.8 644.9 L1173.0 653.1" stroke="#1458d0" stroke-width="2.76"/>
<path d="M1202.8 593.4 L1205.5 604.2 L1208.2 620.5 L1210.9 631.4" stroke="#1458d0" stroke-width="2.53"/>
<path d="M1281.5 577.1 L1286.9 604.2 L1281.5 620.5" stroke="#1a3aa8" stroke-width="2.53"/>
<path d="M1292.3 650.4 L1314.0 650.4 L1324.9 658.5 L1335.7 666.6 L1338.4 680.2 L1335.7 693.7" stroke="#1a2c98" stroke-width="2.53"/>
<path d="M1330.3 628.7 L1352.0 636.8 L1365.5 644.9 L1379.1 658.5 L1389.9 669.3 L1400.8 677.5 L1406.2 691.0 L1411.6 707.3 L1417.1 712.7" stroke="#1a3aa8" stroke-width="2.76"/>
<path d="M1384.5 729.0 L1392.7 726.3 L1406.2 720.9 L1417.1 715.4 L1427.9 712.7 L1435.0 710.0" stroke="#1458d0" stroke-width="2.76"/>
<path d="M1341.1 582.5 L1335.7 598.8 L1324.9 604.2 L1314.0 615.1" stroke="#1a3aa8" stroke-width="2.53"/>
<path d="M1346.6 598.8 L1365.5 596.1 L1384.5 596.1 L1406.2 590.7 L1419.8 577.1 L1435.0 566.3" stroke="#1a3aa8" stroke-width="2.76"/>
<path d="M1398.1 620.5 L1403.5 642.2 L1411.6 663.9 L1411.6 685.6" stroke="#1a2c98" stroke-width="2.53"/>
<path d="M1202.8 696.5 L1197.4 718.2 L1186.5 739.9 L1183.8 767.0 L1192.0 769.7" stroke="#1a2c98" stroke-width="2.53"/>
<path d="M1205.5 712.7 L1216.4 734.4 L1224.5 761.6" stroke="#1a2c98" stroke-width="2.53"/>
<path d="M1135.0 767.0 L1148.6 758.8 L1162.1 767.0 L1175.7 772.4 L1194.7 767.0" stroke="#1a2c98" stroke-width="2.53"/>
<path d="M1135.0 718.2 L1145.8 734.4 L1151.3 758.8" stroke="#1a2c98" stroke-width="2.30"/>
<path d="M1259.8 555.4 L1276.0 552.7 L1286.9 566.3 L1297.7 560.8" stroke="#1a3aa8" stroke-width="2.30"/>
<path d="M1270.6 582.5 L1281.5 593.4 L1286.9 612.4" stroke="#1a2c98" stroke-width="2.30"/>
<path d="M1346.6 739.9 L1360.1 756.1 L1365.5 780.5" stroke="#1458d0" stroke-width="2.53"/>
<path d="M1379.1 813.1 L1392.7 821.2 L1406.2 815.8" stroke="#1458d0" stroke-width="2.99"/>
<path d="M1669.5 550.0 L1653.3 560.8 L1626.1 569.0 L1609.9 577.1 L1607.1 593.4 L1593.6 604.2 L1577.3 620.5 L1566.5 636.8 L1555.6 650.4 L1544.8 661.2" stroke="#1a46b8" stroke-width="3.45"/>
<path d="M1645.1 574.4 L1631.6 579.8 L1615.3 593.4 L1596.3 604.2 L1580.0 615.1" stroke="#1a2c98" stroke-width="2.30"/>
<path d="M1420.0 571.7 L1441.7 566.3 L1474.2 558.1 L1493.2 551.4" stroke="#1a46b8" stroke-width="2.99"/>
<path d="M1482.4 574.4 L1474.2 579.8 L1468.8 596.1 L1460.7 612.4 L1433.6 620.5" stroke="#1a3aa8" stroke-width="2.76"/>
<path d="M1420.0 642.2 L1441.7 631.4 L1460.7 623.2 L1479.7 617.8" stroke="#1a46b8" stroke-width="2.99"/>
<path d="M1493.2 588.0 L1509.5 598.8 L1528.5 597.5 L1539.3 590.7 L1547.5 579.8 L1558.3 566.3 L1569.2 550.0" stroke="#1a46b8" stroke-width="2.99"/>
<path d="M1509.5 598.8 L1514.9 615.1 L1520.4 631.4 L1525.8 650.4 L1528.5 658.5" stroke="#1a3aa8" stroke-width="2.53"/>
<path d="M1490.5 590.7 L1487.8 617.8 L1482.4 631.4" stroke="#1a2c98" stroke-width="2.53"/>
<path d="M1447.1 658.5 L1436.3 663.9 L1430.8 685.6 L1428.1 712.7 L1420.0 715.4" stroke="#1a2c98" stroke-width="2.53"/>
<path d="M1447.1 658.5 L1449.8 685.6 L1441.7 712.7 L1439.0 718.2" stroke="#1a2c98" stroke-width="2.30"/>
<path d="M1504.1 682.9 L1514.9 677.5 L1528.5 674.8 L1536.6 677.5" stroke="#1a2c98" stroke-width="2.53"/>
<path d="M1582.7 655.8 L1596.3 669.3 L1604.4 685.6 L1615.3 707.3 L1623.4 715.4" stroke="#1a46b8" stroke-width="2.76"/>
<path d="M1683.1 625.9 L1696.6 609.7 L1707.5 588.0" stroke="#1a2c98" stroke-width="2.30"/>
<path d="M1533.9 590.7 L1544.8 604.2" stroke="#1a2c98" stroke-width="2.76"/>
</g>
<polygon points="889.2,718.2 897.4,691.0 913.7,666.6 932.6,650.4 959.8,642.2 986.9,644.9 1011.3,650.4 1030.3,661.2 1030.3,669.3 1011.3,669.3 986.9,666.6 959.8,666.6 940.8,677.5 924.5,685.6 910.9,701.9 902.8,718.2" fill="#f4fffc" stroke="#40e0c8" stroke-width="1.6" opacity="0.95"/>
<polygon points="1415.2,289.1 1422.4,287.6 1442.8,303.6 1457.3,310.0 1483.5,325.4 1506.7,339.1 1527.1,350.7 1545.1,366.1 1537.3,376.9 1512.6,376.9 1493.7,365.2 1476.2,351.6 1454.4,334.1 1437.0,318.1 1416.6,297.8" fill="#f4fffc" stroke="#40e0c8" stroke-width="1.6" opacity="0.95"/>
</svg> PANEL -->
<div class="a" style="left:600px;top:44px;width:1320px;height:970px;border-top:1px solid #a0a0a0;border-left:1px solid #fff;border-right:2px solid #a0a0a0;border-bottom:2px solid #a0a0a0;background:#fff"></div>
<div class="a" style="left:601px;top:45px;width:1317px;height:29px;background:#f0f0f0"></div>
<svg class="a" style="left:612px;top:51px" width="17" height="16" viewBox="0 0 17 16"><circle cx="7" cy="6" r="5.3" fill="none" stroke="#0a0a60" stroke-width="1.6"/><path d="M4 6h6M7 3v6" stroke="#0a0a60" stroke-width="1.8"/><line x1="11" y1="10" x2="15" y2="14.5" stroke="#0a0a60" stroke-width="2"/></svg>
<div class="a" style="left:633px;top:52px;white-space:nowrap">Zoom in</div>
<div class="a" style="left:719px;top:52px;white-space:nowrap;color:#a0a0a0">Zoom out</div>
<div class="a" style="left:784px;top:48px;width:2px;height:24px;border-left:1px solid #a0a0a0;border-right:1px solid #fff"></div>
<div class="a" style="left:789px;top:48px;width:89px;height:22px;border:1px solid #a0a0a0;border-right-color:#fff;border-bottom-color:#fff;background:#f4f4f4"></div>
<svg class="a" style="left:802px;top:52px" width="14" height="15" viewBox="0 0 14 15"><path d="M4 13 L1.5 8.5 Q1 7.5 2 7.3 L4 9 V3 Q4 2 5 2 Q6 2 6 3 V7 V2 Q6 1 7 1 Q8 1 8 2 V7 V2.5 Q8 1.6 9 1.6 Q10 1.6 10 2.5 V7.5 V4 Q10 3 11 3 Q12 3 12 4 V10 Q12 13 10 14 H5.5 Z" fill="#fff" stroke="#222" stroke-width="0.9"/></svg>
<div class="a" style="left:820px;top:53px;white-space:nowrap">Pan map</div>
<svg class="a" style="left:886px;top:52px" width="15" height="15" viewBox="0 0 15 15"><rect x="1" y="1" width="13" height="13" rx="2" fill="none" stroke="#222" stroke-width="1.1" stroke-dasharray="3 2"/></svg>
<div class="a" style="left:906px;top:52px;white-space:nowrap">Rectangle</div>
<div class="a" style="left:977px;top:48px;width:280px;height:22px;background:#fff"></div>
<svg class="a" style="left:1264px;top:50px" width="15" height="17" viewBox="0 0 15 17"><path d="M7.5 1v10M3.5 7l4 4 4-4M1 12v3h13v-3" fill="none" stroke="#333" stroke-width="1.1"/></svg>
<div class="a" style="left:1284px;top:52px;white-space:nowrap">Download</div>
<svg class="a" style="left:0;top:0" width="1920" height="1032" viewBox="0 0 1920 1032">
<defs><clipPath id="sil"><polygon points="1003,362 1137,362 1137,334 1300,334 1300,277 1385,277 1385,308 1512,308 1512,338 1555,338 1551,486 1591,486 1591,512 1634,512 1634,490 1675,488 1694,549 1716,549 1716,630 1629,630 1629,715 1585,715 1585,684 1543,684 1543,714 1502,714 1502,677 1462,677 1460,767 1418,767 1418,796 1459,796 1459,825 1377,825 1377,794 1335,794 1335,737 1294,737 1294,709 1256,709 1256,793 1131,793 1131,821 1047,821 1047,793 1006,793 1006,677 960,668 925,690 925,739 840,739 840,624 870,585 920,520 962,452 1003,420"/></clipPath>
<filter id="tex" filterUnits="userSpaceOnUse" x="700" y="200" width="1150" height="700" color-interpolation-filters="sRGB"><feColorMatrix in="SourceGraphic" type="matrix" values="0 0 0 0 0  0 0 0 0 0  0 0 0 0 0  1 0 0 0 0" result="src"/><feGaussianBlur in="src" stdDeviation="12" result="d"/><feTurbulence type="fractalNoise" baseFrequency="0.22" numOctaves="3" seed="5" result="n"/><feColorMatrix in="n" type="matrix" values="0 0 0 0 0  0 0 0 0 0  0 0 0 0 0  2.5 0 0 0 -0.75" result="na"/><feComposite in="d" in2="na" operator="arithmetic" k1="0" k2="1" k3="-1" k4="0.5" result="c"/><feComponentTransfer in="c" result="th"><feFuncA type="linear" slope="40" intercept="-20"/></feComponentTransfer><feFlood flood-color="#74aef8"/><feComposite in2="th" operator="in"/></filter></defs>
<g clip-path="url(#sil)"><g filter="url(#tex)">
<rect x="780" y="221" width="60" height="55" fill="#101010"/>
<rect x="840" y="221" width="60" height="55" fill="#101010"/>
<rect x="900" y="221" width="60" height="55" fill="#111111"/>
<rect x="960" y="221" width="60" height="55" fill="#111111"/>
<rect x="1020" y="221" width="60" height="55" fill="#171717"/>
<rect x="1080" y="221" width="60" height="55" fill="#393939"/>
<rect x="1140" y="221" width="60" height="55" fill="#666666"/>
<rect x="1200" y="221" width="60" height="55" fill="#7c7c7c"/>
<rect x="1260" y="221" width="60" height="55" fill="#636363"/>
<rect x="1320" y="221" width="60" height="55" fill="#6a6a6a"/>
<rect x="1380" y="221" width="60" height="55" fill="#b6b6b6"/>
<rect x="1440" y="221" width="60" height="55" fill="#b6b6b6"/>
<rect x="1500" y="221" width="60" height="55" fill="#959595"/>
<rect x="1560" y="221" width="60" height="55" fill="#aeaeae"/>
<rect x="1620" y="221" width="60" height="55" fill="#b7b7b7"/>
<rect x="1680" y="221" width="60" height="55" fill="#a9a9a9"/>
<rect x="1740" y="221" width="60" height="55" fill="#a9a9a9"/>
<rect x="780" y="276" width="60" height="55" fill="#101010"/>
<rect x="840" y="276" width="60" height="55" fill="#101010"/>
<rect x="900" y="276" width="60" height="55" fill="#111111"/>
<rect x="960" y="276" width="60" height="55" fill="#111111"/>
<rect x="1020" y="276" width="60" height="55" fill="#171717"/>
<rect x="1080" y="276" width="60" height="55" fill="#393939"/>
<rect x="1140" y="276" width="60" height="55" fill="#666666"/>
<rect x="1200" y="276" width="60" height="55" fill="#7c7c7c"/>
<rect x="1260" y="276" width="60" height="55" fill="#636363"/>
<rect x="1320" y="276" width="60" height="55" fill="#6a6a6a"/>
<rect x="1380" y="276" width="60" height="55" fill="#b6b6b6"/>
<rect x="1440" y="276" width="60" height="55" fill="#b6b6b6"/>
<rect x="1500" y="276" width="60" height="55" fill="#959595"/>
<rect x="1560" y="276" width="60" height="55" fill="#aeaeae"/>
<rect x="1620" y="276" width="60" height="55" fill="#b7b7b7"/>
<rect x="1680" y="276" width="60" height="55" fill="#a9a9a9"/>
<rect x="1740" y="276" width="60" height="55" fill="#a9a9a9"/>
<rect x="780" y="331" width="60" height="55" fill="#0a0a0a"/>
<rect x="840" y="331" width="60" height="55" fill="#0a0a0a"/>
<rect x="900" y="331" width="60" height="55" fill="#0f0f0f"/>
<rect x="960" y="331" width="60" height="55" fill="#111111"/>
<rect x="1020" y="331" width="60" height="55" fill="#111111"/>
<rect x="1080" y="331" width="60" height="55" fill="#242424"/>
<rect x="1140" y="331" width="60" height="55" fill="#747474"/>
<rect x="1200" y="331" width="60" height="55" fill="#959595"/>
<rect x="1260" y="331" width="60" height="55" fill="#858585"/>
<rect x="1320" y="331" width="60" height="55" fill="#a6a6a6"/>
<rect x="1380" y="331" width="60" height="55" fill="#d7d7d7"/>
<rect x="1440" y="331" width="60" height="55" fill="#a6a6a6"/>
<rect x="1500" y="331" width="60" height="55" fill="#c7c7c7"/>
<rect x="1560" y="331" width="60" height="55" fill="#bfbfbf"/>
<rect x="1620" y="331" width="60" height="55" fill="#acacac"/>
<rect x="1680" y="331" width="60" height="55" fill="#999999"/>
<rect x="1740" y="331" width="60" height="55" fill="#999999"/>
<rect x="780" y="386" width="60" height="55" fill="#000000"/>
<rect x="840" y="386" width="60" height="55" fill="#000000"/>
<rect x="900" y="386" width="60" height="55" fill="#0a0a0a"/>
<rect x="960" y="386" width="60" height="55" fill="#0e0e0e"/>
<rect x="1020" y="386" width="60" height="55" fill="#171717"/>
<rect x="1080" y="386" width="60" height="55" fill="#535353"/>
<rect x="1140" y="386" width="60" height="55" fill="#747474"/>
<rect x="1200" y="386" width="60" height="55" fill="#858585"/>
<rect x="1260" y="386" width="60" height="55" fill="#959595"/>
<rect x="1320" y="386" width="60" height="55" fill="#c7c7c7"/>
<rect x="1380" y="386" width="60" height="55" fill="#e6e6e6"/>
<rect x="1440" y="386" width="60" height="55" fill="#e6e6e6"/>
<rect x="1500" y="386" width="60" height="55" fill="#e1e1e1"/>
<rect x="1560" y="386" width="60" height="55" fill="#bcbcbc"/>
<rect x="1620" y="386" width="60" height="55" fill="#9d9d9d"/>
<rect x="1680" y="386" width="60" height="55" fill="#959595"/>
<rect x="1740" y="386" width="60" height="55" fill="#959595"/>
<rect x="780" y="441" width="60" height="55" fill="#040404"/>
<rect x="840" y="441" width="60" height="55" fill="#040404"/>
<rect x="900" y="441" width="60" height="55" fill="#000000"/>
<rect x="960" y="441" width="60" height="55" fill="#0b0b0b"/>
<rect x="1020" y="441" width="60" height="55" fill="#171717"/>
<rect x="1080" y="441" width="60" height="55" fill="#535353"/>
<rect x="1140" y="441" width="60" height="55" fill="#8b8b8b"/>
<rect x="1200" y="441" width="60" height="55" fill="#c7c7c7"/>
<rect x="1260" y="441" width="60" height="55" fill="#c7c7c7"/>
<rect x="1320" y="441" width="60" height="55" fill="#e1e1e1"/>
<rect x="1380" y="441" width="60" height="55" fill="#e6e6e6"/>
<rect x="1440" y="441" width="60" height="55" fill="#e1e1e1"/>
<rect x="1500" y="441" width="60" height="55" fill="#c7c7c7"/>
<rect x="1560" y="441" width="60" height="55" fill="#a6a6a6"/>
<rect x="1620" y="441" width="60" height="55" fill="#959595"/>
<rect x="1680" y="441" width="60" height="55" fill="#818181"/>
<rect x="1740" y="441" width="60" height="55" fill="#818181"/>
<rect x="780" y="496" width="60" height="55" fill="#0a0a0a"/>
<rect x="840" y="496" width="60" height="55" fill="#0a0a0a"/>
<rect x="900" y="496" width="60" height="55" fill="#080808"/>
<rect x="960" y="496" width="60" height="55" fill="#111111"/>
<rect x="1020" y="496" width="60" height="55" fill="#242424"/>
<rect x="1080" y="496" width="60" height="55" fill="#c7c7c7"/>
<rect x="1140" y="496" width="60" height="55" fill="#e6e6e6"/>
<rect x="1200" y="496" width="60" height="55" fill="#e6e6e6"/>
<rect x="1260" y="496" width="60" height="55" fill="#a6a6a6"/>
<rect x="1320" y="496" width="60" height="55" fill="#c0c0c0"/>
<rect x="1380" y="496" width="60" height="55" fill="#b6b6b6"/>
<rect x="1440" y="496" width="60" height="55" fill="#b6b6b6"/>
<rect x="1500" y="496" width="60" height="55" fill="#b6b6b6"/>
<rect x="1560" y="496" width="60" height="55" fill="#959595"/>
<rect x="1620" y="496" width="60" height="55" fill="#777777"/>
<rect x="1680" y="496" width="60" height="55" fill="#777777"/>
<rect x="1740" y="496" width="60" height="55" fill="#777777"/>
<rect x="780" y="551" width="60" height="55" fill="#050505"/>
<rect x="840" y="551" width="60" height="55" fill="#050505"/>
<rect x="900" y="551" width="60" height="55" fill="#1d1d1d"/>
<rect x="960" y="551" width="60" height="55" fill="#535353"/>
<rect x="1020" y="551" width="60" height="55" fill="#7e7e7e"/>
<rect x="1080" y="551" width="60" height="55" fill="#e1e1e1"/>
<rect x="1140" y="551" width="60" height="55" fill="#c7c7c7"/>
<rect x="1200" y="551" width="60" height="55" fill="#959595"/>
<rect x="1260" y="551" width="60" height="55" fill="#959595"/>
<rect x="1320" y="551" width="60" height="55" fill="#c0c0c0"/>
<rect x="1380" y="551" width="60" height="55" fill="#b6b6b6"/>
<rect x="1440" y="551" width="60" height="55" fill="#acacac"/>
<rect x="1500" y="551" width="60" height="55" fill="#a6a6a6"/>
<rect x="1560" y="551" width="60" height="55" fill="#9f9f9f"/>
<rect x="1620" y="551" width="60" height="55" fill="#989898"/>
<rect x="1680" y="551" width="60" height="55" fill="#959595"/>
<rect x="1740" y="551" width="60" height="55" fill="#959595"/>
<rect x="780" y="606" width="60" height="55" fill="#171717"/>
<rect x="840" y="606" width="60" height="55" fill="#171717"/>
<rect x="900" y="606" width="60" height="55" fill="#3a3a3a"/>
<rect x="960" y="606" width="60" height="55" fill="#747474"/>
<rect x="1020" y="606" width="60" height="55" fill="#959595"/>
<rect x="1080" y="606" width="60" height="55" fill="#cecece"/>
<rect x="1140" y="606" width="60" height="55" fill="#a6a6a6"/>
<rect x="1200" y="606" width="60" height="55" fill="#5d5d5d"/>
<rect x="1260" y="606" width="60" height="55" fill="#959595"/>
<rect x="1320" y="606" width="60" height="55" fill="#c0c0c0"/>
<rect x="1380" y="606" width="60" height="55" fill="#c0c0c0"/>
<rect x="1440" y="606" width="60" height="55" fill="#b3b3b3"/>
<rect x="1500" y="606" width="60" height="55" fill="#a6a6a6"/>
<rect x="1560" y="606" width="60" height="55" fill="#989898"/>
<rect x="1620" y="606" width="60" height="55" fill="#989898"/>
<rect x="1680" y="606" width="60" height="55" fill="#959595"/>
<rect x="1740" y="606" width="60" height="55" fill="#959595"/>
<rect x="780" y="661" width="60" height="55" fill="#2f2f2f"/>
<rect x="840" y="661" width="60" height="55" fill="#2f2f2f"/>
<rect x="900" y="661" width="60" height="55" fill="#5d5d5d"/>
<rect x="960" y="661" width="60" height="55" fill="#242424"/>
<rect x="1020" y="661" width="60" height="55" fill="#7e7e7e"/>
<rect x="1080" y="661" width="60" height="55" fill="#a6a6a6"/>
<rect x="1140" y="661" width="60" height="55" fill="#a6a6a6"/>
<rect x="1200" y="661" width="60" height="55" fill="#959595"/>
<rect x="1260" y="661" width="60" height="55" fill="#a6a6a6"/>
<rect x="1320" y="661" width="60" height="55" fill="#c7c7c7"/>
<rect x="1380" y="661" width="60" height="55" fill="#c0c0c0"/>
<rect x="1440" y="661" width="60" height="55" fill="#a6a6a6"/>
<rect x="1500" y="661" width="60" height="55" fill="#9f9f9f"/>
<rect x="1560" y="661" width="60" height="55" fill="#959595"/>
<rect x="1620" y="661" width="60" height="55" fill="#959595"/>
<rect x="1680" y="661" width="60" height="55" fill="#969696"/>
<rect x="1740" y="661" width="60" height="55" fill="#969696"/>
<rect x="780" y="716" width="60" height="55" fill="#636363"/>
<rect x="840" y="716" width="60" height="55" fill="#636363"/>
<rect x="900" y="716" width="60" height="55" fill="#636363"/>
<rect x="960" y="716" width="60" height="55" fill="#858585"/>
<rect x="1020" y="716" width="60" height="55" fill="#959595"/>
<rect x="1080" y="716" width="60" height="55" fill="#959595"/>
<rect x="1140" y="716" width="60" height="55" fill="#858585"/>
<rect x="1200" y="716" width="60" height="55" fill="#959595"/>
<rect x="1260" y="716" width="60" height="55" fill="#b6b6b6"/>
<rect x="1320" y="716" width="60" height="55" fill="#c7c7c7"/>
<rect x="1380" y="716" width="60" height="55" fill="#e6e6e6"/>
<rect x="1440" y="716" width="60" height="55" fill="#cecece"/>
<rect x="1500" y="716" width="60" height="55" fill="#acacac"/>
<rect x="1560" y="716" width="60" height="55" fill="#989898"/>
<rect x="1620" y="716" width="60" height="55" fill="#959595"/>
<rect x="1680" y="716" width="60" height="55" fill="#959595"/>
<rect x="1740" y="716" width="60" height="55" fill="#959595"/>
<rect x="780" y="771" width="60" height="55" fill="#636363"/>
<rect x="840" y="771" width="60" height="55" fill="#636363"/>
<rect x="900" y="771" width="60" height="55" fill="#707070"/>
<rect x="960" y="771" width="60" height="55" fill="#747474"/>
<rect x="1020" y="771" width="60" height="55" fill="#636363"/>
<rect x="1080" y="771" width="60" height="55" fill="#636363"/>
<rect x="1140" y="771" width="60" height="55" fill="#636363"/>
<rect x="1200" y="771" width="60" height="55" fill="#858585"/>
<rect x="1260" y="771" width="60" height="55" fill="#acacac"/>
<rect x="1320" y="771" width="60" height="55" fill="#c7c7c7"/>
<rect x="1380" y="771" width="60" height="55" fill="#d7d7d7"/>
<rect x="1440" y="771" width="60" height="55" fill="#b6b6b6"/>
<rect x="1500" y="771" width="60" height="55" fill="#c2c2c2"/>
<rect x="1560" y="771" width="60" height="55" fill="#a7a7a7"/>
<rect x="1620" y="771" width="60" height="55" fill="#969696"/>
<rect x="1680" y="771" width="60" height="55" fill="#959595"/>
<rect x="1740" y="771" width="60" height="55" fill="#959595"/>
<rect x="780" y="826" width="60" height="55" fill="#636363"/>
<rect x="840" y="826" width="60" height="55" fill="#636363"/>
<rect x="900" y="826" width="60" height="55" fill="#707070"/>
<rect x="960" y="826" width="60" height="55" fill="#747474"/>
<rect x="1020" y="826" width="60" height="55" fill="#636363"/>
<rect x="1080" y="826" width="60" height="55" fill="#636363"/>
<rect x="1140" y="826" width="60" height="55" fill="#636363"/>
<rect x="1200" y="826" width="60" height="55" fill="#858585"/>
<rect x="1260" y="826" width="60" height="55" fill="#acacac"/>
<rect x="1320" y="826" width="60" height="55" fill="#c7c7c7"/>
<rect x="1380" y="826" width="60" height="55" fill="#d7d7d7"/>
<rect x="1440" y="826" width="60" height="55" fill="#b6b6b6"/>
<rect x="1500" y="826" width="60" height="55" fill="#c2c2c2"/>
<rect x="1560" y="826" width="60" height="55" fill="#a7a7a7"/>
<rect x="1620" y="826" width="60" height="55" fill="#969696"/>
<rect x="1680" y="826" width="60" height="55" fill="#959595"/>
<rect x="1740" y="826" width="60" height="55" fill="#959595"/>
<polygon points="1169,478 1230,470 1285,492 1285,555 1240,565 1170,560" fill="#bdbdbd"/>
<polygon points="1379,384 1433,390 1440,470 1400,514 1370,500" fill="#bdbdbd"/>
<polygon points="1395,340 1470,350 1550,420 1550,470 1490,440 1440,420" fill="#b8b8b8"/>
<polygon points="1340,720 1455,720 1455,822 1380,822 1340,790" fill="#bdbdbd"/>
<polygon points="1174,600 1230,588 1275,605 1282,650 1250,674 1200,670 1168,640" fill="#242424"/>
<polygon points="1438,482 1498,428 1516,440 1456,494" fill="#1f1f1f"/>
</g></g>
<g fill="none" stroke="#6fa6f2" stroke-width="1.3" stroke-linecap="round" clip-path="url(#sil)">
<path d="M976 553 L981 550 L987 547 L992 544"/>
<path d="M1078 397 L1081 395 L1084 393 L1086 391"/>
<path d="M977 458 L987 456 L997 454 L1006 452"/>
<path d="M861 622 L867 616 L875 611 L884 609"/>
<path d="M1074 455 L1078 453 L1083 451 L1087 448"/>
<path d="M858 632 L863 627 L866 621 L870 616"/>
<path d="M1072 475 L1074 473 L1075 470 L1077 467"/>
<path d="M1020 490 L1028 483 L1036 477 L1044 473"/>
<path d="M912 601 L918 595 L924 589 L929 581"/>
<path d="M1056 388 L1062 384 L1068 381 L1073 377"/>
<path d="M1115 433 L1118 430 L1120 425 L1121 421"/>
<path d="M951 557 L955 554 L960 552 L965 551"/>
<path d="M845 670 L852 663 L859 656 L865 649"/>
<path d="M1059 472 L1062 471 L1065 470 L1068 469"/>
<path d="M1027 493 L1032 488 L1037 482 L1043 479"/>
<path d="M1014 513 L1017 511 L1020 509 L1023 508"/>
<path d="M984 442 L990 439 L996 437 L1002 435"/>
<path d="M1043 433 L1051 427 L1057 421 L1066 416"/>
<path d="M1015 471 L1020 467 L1026 465 L1032 463"/>
<path d="M988 471 L997 465 L1003 458 L1008 450"/>
<path d="M1102 379 L1107 375 L1113 371 L1118 366"/>
<path d="M847 643 L849 640 L851 637 L853 634"/>
<path d="M1045 432 L1048 429 L1050 425 L1052 422"/>
<path d="M1057 409 L1063 405 L1070 402 L1076 399"/>
<path d="M1035 434 L1043 430 L1051 427 L1059 422"/>
<path d="M1077 472 L1085 467 L1091 461 L1097 454"/>
<path d="M1083 386 L1086 384 L1089 382 L1092 380"/>
<path d="M998 462 L1004 458 L1011 456 L1018 454"/>
<path d="M1012 432 L1017 429 L1021 424 L1027 420"/>
<path d="M995 499 L1001 496 L1007 493 L1012 489"/>
<path d="M1002 504 L1009 498 L1017 493 L1023 486"/>
<path d="M879 626 L881 623 L883 619 L886 616"/>
<path d="M947 573 L951 566 L955 559 L957 551"/>
<path d="M971 491 L975 486 L978 480 L982 474"/>
<path d="M1097 443 L1105 440 L1113 437 L1120 432"/>
<path d="M1058 452 L1064 445 L1070 439 L1075 432"/>
<path d="M1131 404 L1137 399 L1144 394 L1150 389"/>
<path d="M1069 474 L1074 470 L1079 466 L1083 461"/>
<path d="M1029 501 L1035 498 L1041 497 L1047 496"/>
<path d="M947 579 L951 577 L955 576 L959 575"/>
<path d="M1000 496 L1007 493 L1014 492 L1021 493"/>
<path d="M1062 451 L1064 449 L1065 446 L1066 443"/>
<path d="M1005 535 L1012 534 L1019 533 L1025 534"/>
<path d="M1068 380 L1071 378 L1074 376 L1077 373"/>
<path d="M1023 385 L1029 382 L1034 380 L1039 377"/>
<path d="M926 584 L930 582 L934 579 L937 576"/>
<path d="M887 618 L895 613 L901 606 L909 601"/>
<path d="M1123 390 L1128 387 L1134 386 L1140 383"/>
<path d="M1021 404 L1025 399 L1028 394 L1031 389"/>
<path d="M919 560 L925 555 L933 552 L941 551"/>
<path d="M1060 445 L1068 439 L1075 434 L1083 429"/>
<path d="M921 594 L927 591 L934 588 L940 584"/>
<path d="M1027 399 L1029 397 L1031 395 L1034 392"/>
<path d="M1029 490 L1032 487 L1036 485 L1040 483"/>
<path d="M1071 436 L1075 434 L1078 432 L1082 429"/>
<path d="M1103 391 L1107 386 L1112 382 L1117 376"/>
<path d="M1073 390 L1076 384 L1080 377 L1084 371"/>
<path d="M1048 460 L1052 456 L1056 453 L1059 448"/>
<path d="M1081 467 L1086 465 L1091 463 L1096 461"/>
<path d="M949 487 L952 484 L956 479 L959 474"/>
<path d="M893 619 L896 616 L900 613 L903 609"/>
<path d="M1076 393 L1083 389 L1088 383 L1094 377"/>
<path d="M883 615 L886 612 L890 609 L894 607"/>
<path d="M966 506 L974 502 L980 497 L986 492"/>
<path d="M1073 425 L1077 421 L1082 418 L1086 413"/>
<path d="M1067 469 L1074 464 L1080 458 L1087 453"/>
<path d="M985 439 L992 433 L999 427 L1007 420"/>
<path d="M995 457 L1001 453 L1005 447 L1010 441"/>
<path d="M920 544 L924 537 L929 530 L935 525"/>
<path d="M1087 393 L1091 386 L1095 379 L1099 372"/>
<path d="M1115 395 L1119 393 L1122 391 L1126 389"/>
<path d="M932 522 L936 519 L941 516 L944 512"/>
<path d="M1053 445 L1057 440 L1061 436 L1067 433"/>
<path d="M902 571 L906 568 L910 564 L913 559"/>
<path d="M1059 475 L1066 473 L1072 470 L1079 468"/>
<path d="M1052 425 L1060 420 L1065 413 L1069 405"/>
<path d="M956 476 L958 474 L960 472 L963 471"/>
<path d="M1023 371 L1027 368 L1030 364 L1033 360"/>
<path d="M888 622 L893 618 L899 614 L903 610"/>
<path d="M1091 431 L1096 427 L1101 421 L1104 415"/>
<path d="M948 520 L953 512 L960 505 L967 498"/>
<path d="M1020 406 L1025 405 L1029 403 L1034 401"/>
<path d="M1089 427 L1091 425 L1093 422 L1095 419"/>
<path d="M932 590 L937 587 L942 585 L947 582"/>
<path d="M1011 423 L1015 421 L1018 418 L1022 415"/>
<path d="M1020 522 L1026 518 L1033 515 L1040 513"/>
<path d="M963 510 L970 505 L978 500 L985 494"/>
<path d="M931 564 L934 561 L936 558 L938 555"/>
<path d="M998 445 L1001 441 L1004 436 L1007 431"/>
<path d="M1082 439 L1088 437 L1094 434 L1100 431"/>
<path d="M959 484 L961 482 L963 480 L966 478"/>
<path d="M946 523 L954 519 L961 513 L969 508"/>
<path d="M1058 470 L1066 467 L1074 462 L1082 458"/>
<path d="M911 588 L916 585 L921 584 L926 583"/>
<path d="M923 579 L929 572 L936 564 L943 557"/>
<path d="M1081 394 L1086 388 L1090 381 L1095 374"/>
<path d="M1136 376 L1142 371 L1150 367 L1157 363"/>
<path d="M1033 485 L1040 481 L1048 476 L1055 473"/>
<path d="M1074 420 L1077 418 L1081 416 L1085 414"/>
<path d="M1077 444 L1081 442 L1084 439 L1087 436"/>
<path d="M970 513 L975 506 L981 500 L987 494"/>
<path d="M934 573 L938 571 L941 567 L945 564"/>
<path d="M888 596 L894 590 L900 584 L905 577"/>
<path d="M1063 378 L1069 370 L1073 362 L1077 354"/>
<path d="M1006 446 L1012 439 L1019 432 L1027 427"/>
<path d="M1023 378 L1027 372 L1031 366 L1035 360"/>
<path d="M933 515 L940 513 L947 510 L954 506"/>
<path d="M967 547 L972 541 L977 535 L983 530"/>
<path d="M962 494 L965 492 L968 489 L971 486"/>
<path d="M929 590 L933 588 L937 587 L942 587"/>
<path d="M1101 444 L1103 442 L1106 439 L1108 437"/>
<path d="M955 475 L958 471 L961 468 L964 464"/>
<path d="M890 588 L892 585 L894 583 L896 580"/>
<path d="M981 474 L983 472 L985 470 L987 469"/>
<path d="M919 589 L923 585 L929 582 L934 579"/>
<path d="M1026 503 L1030 500 L1035 499 L1039 498"/>
<path d="M1113 378 L1117 373 L1120 367 L1125 363"/>
<path d="M909 593 L911 591 L912 589 L914 587"/>
<path d="M888 573 L893 569 L897 563 L902 559"/>
<path d="M1000 444 L1003 440 L1006 436 L1008 431"/>
</g>
<g fill="none" stroke="#5de8d0" stroke-linecap="round" stroke-linejoin="round" opacity="0.9">
<path stroke-width="11" d="M991 559 L1015 541 L1045 518 L1070 496 L1089 476"/>
<path stroke-width="5" d="M1162 583 L1180 597 L1197 594 L1215 585 L1232 578 L1250 580 L1262 590"/>
<path stroke-width="5" d="M1284 492 L1300 500 L1318 506 L1338 512"/>
<path stroke-width="4" d="M1296 470 L1300 490"/>
<path stroke-width="6" d="M1325 414 L1340 428 L1352 438 L1374 449 L1401 452"/>
<path stroke-width="5" d="M1428 473 L1445 475 L1463 476"/>
<path stroke-width="6" d="M1362 737 L1350 750 L1341 767 L1336 789"/>
<path stroke-width="4" d="M1385 768 L1400 785 L1410 800"/>
<path stroke-width="4" d="M884 639 L905 615 L927 593"/>
</g>
<g fill="none" stroke="#f0fffa" stroke-linecap="round" stroke-linejoin="round" opacity="0.8">
<path stroke-width="5.0" d="M991 559 L1015 541 L1045 518 L1070 496 L1089 476"/>
<path stroke-width="2.2" d="M1162 583 L1180 597 L1197 594 L1215 585 L1232 578 L1250 580 L1262 590"/>
<path stroke-width="2.2" d="M1284 492 L1300 500 L1318 506 L1338 512"/>
<path stroke-width="2.7" d="M1325 414 L1340 428 L1352 438 L1374 449 L1401 452"/>
<path stroke-width="2.2" d="M1428 473 L1445 475 L1463 476"/>
<path stroke-width="2.7" d="M1362 737 L1350 750 L1341 767 L1336 789"/>
</g>
<g fill="none" stroke-linecap="round" stroke-linejoin="round" stroke-width="1.5">
<path stroke="#1458d0" d="M1084 531 L1081 530 L1078 528 L1075 526"/>
<path stroke="#1458d0" d="M1085 542 L1083 544 L1080 545 L1078 546"/>
<path stroke="#1458d0" d="M1130 539 L1132 540 L1134 542 L1135 543"/>
<path stroke="#1458d0" d="M1041 544 L1047 546 L1053 546 L1059 544"/>
<path stroke="#1458d0" d="M1167 363 L1168 367 L1168 372 L1167 376"/>
<path stroke="#1458d0" d="M1186 357 L1185 353 L1184 350 L1181 347"/>
<path stroke="#1458d0" d="M1199 353 L1201 347 L1203 340 L1207 335"/>
<path stroke="#1458d0" d="M1207 351 L1211 349 L1214 346 L1218 343"/>
<path stroke="#1458d0" d="M1235 351 L1236 347 L1236 342 L1234 338"/>
<path stroke="#1458d0" d="M1258 347 L1261 353 L1264 358 L1266 364"/>
<path stroke="#1458d0" d="M1301 324 L1307 323 L1312 321 L1317 317"/>
<path stroke="#1458d0" d="M1310 308 L1315 304 L1320 300 L1325 296"/>
<path stroke="#1458d0" d="M1166 444 L1169 441 L1170 437 L1172 433"/>
<path stroke="#1458d0" d="M1183 438 L1185 435 L1185 432 L1187 429"/>
<path stroke="#1458d0" d="M1214 411 L1217 411 L1221 411 L1224 410"/>
<path stroke="#1458d0" d="M1269 372 L1274 373 L1279 375 L1283 377"/>
<path stroke="#1458d0" d="M1294 399 L1296 398 L1298 397 L1300 395"/>
<path stroke="#1458d0" d="M1297 414 L1295 415 L1293 416 L1290 416"/>
<path stroke="#1458d0" d="M1298 418 L1300 420 L1302 421 L1304 422"/>
<path stroke="#1458d0" d="M1304 447 L1299 449 L1295 450 L1290 452"/>
<path stroke="#1458d0" d="M1321 473 L1326 475 L1331 476 L1336 478"/>
<path stroke="#1458d0" d="M1342 483 L1345 479 L1348 475 L1350 471"/>
<path stroke="#1458d0" d="M1300 359 L1304 353 L1307 347 L1310 342"/>
<path stroke="#1458d0" d="M1333 398 L1330 402 L1326 405 L1323 409"/>
<path stroke="#1458d0" d="M1373 421 L1373 427 L1373 432 L1375 437"/>
<path stroke="#1458d0" d="M1388 461 L1385 464 L1382 467 L1379 470"/>
<path stroke="#1458d0" d="M1358 351 L1361 348 L1362 345 L1364 342"/>
<path stroke="#1458d0" d="M1402 380 L1405 379 L1409 378 L1413 378"/>
<path stroke="#1458d0" d="M1341 342 L1339 339 L1337 336 L1336 333"/>
<path stroke="#1458d0" d="M1160 501 L1162 500 L1165 500 L1168 499"/>
<path stroke="#1458d0" d="M1172 510 L1174 515 L1175 520 L1175 526"/>
<path stroke="#1458d0" d="M1188 545 L1190 546 L1192 548 L1194 549"/>
<path stroke="#1458d0" d="M1256 495 L1258 489 L1260 483 L1261 476"/>
<path stroke="#1458d0" d="M1425 405 L1428 406 L1430 407 L1432 409"/>
<path stroke="#1458d0" d="M1425 458 L1421 459 L1416 459 L1412 458"/>
<path stroke="#1458d0" d="M1421 473 L1415 473 L1408 472 L1402 472"/>
<path stroke="#1458d0" d="M1421 485 L1416 486 L1412 489 L1408 490"/>
<path stroke="#1458d0" d="M1176 362 L1180 363 L1183 365 L1187 367"/>
<path stroke="#1458d0" d="M1190 381 L1192 378 L1195 377 L1198 376"/>
<path stroke="#1458d0" d="M1226 346 L1224 351 L1222 356 L1220 360"/>
<path stroke="#1458d0" d="M1386 404 L1385 406 L1384 409 L1384 412"/>
<path stroke="#1458d0" d="M1499 468 L1503 467 L1507 468 L1511 468"/>
<path stroke="#1458d0" d="M1500 503 L1496 507 L1491 510 L1487 514"/>
<path stroke="#1458d0" d="M1508 529 L1510 535 L1514 539 L1516 545"/>
<path stroke="#1a3aa8" d="M1536 462 L1533 465 L1530 469 L1527 474"/>
<path stroke="#1458d0" d="M1429 385 L1430 387 L1432 390 L1433 392"/>
<path stroke="#1458d0" d="M1427 418 L1422 422 L1417 425 L1411 427"/>
<path stroke="#1458d0" d="M1423 396 L1427 397 L1430 399 L1432 402"/>
<path stroke="#1458d0" d="M1438 442 L1444 443 L1448 445 L1453 447"/>
<path stroke="#1458d0" d="M1542 351 L1540 351 L1537 352 L1535 352"/>
<path stroke="#1a2c98" d="M1459 517 L1462 511 L1463 505 L1462 499"/>
<path stroke="#1a2c98" d="M1488 526 L1493 530 L1498 535 L1504 538"/>
<path stroke="#1458d0" d="M1642 508 L1647 511 L1653 513 L1657 517"/>
<path stroke="#2a2a90" d="M1575 525 L1581 522 L1588 520 L1594 520"/>
<path stroke="#1458d0" d="M1547 532 L1550 527 L1553 520 L1557 515"/>
<path stroke="#1458d0" d="M1531 394 L1532 400 L1534 405 L1535 411"/>
<path stroke="#1458d0" d="M1463 396 L1467 393 L1470 392 L1474 392"/>
<path stroke="#1458d0" d="M845 698 L849 693 L851 687 L850 681"/>
<path stroke="#1458d0" d="M955 578 L954 573 L953 569 L953 564"/>
<path stroke="#1458d0" d="M977 561 L982 561 L986 560 L991 561"/>
<path stroke="#1458d0" d="M959 626 L961 627 L963 629 L964 631"/>
<path stroke="#1458d0" d="M1011 576 L1009 581 L1005 586 L1004 591"/>
<path stroke="#1458d0" d="M1006 559 L1002 564 L1000 570 L998 576"/>
<path stroke="#1458d0" d="M1010 589 L1013 591 L1016 594 L1020 596"/>
<path stroke="#1458d0" d="M1024 575 L1029 577 L1034 580 L1040 581"/>
<path stroke="#1458d0" d="M906 724 L907 727 L908 729 L909 732"/>
<path stroke="#1a3aa8" d="M1053 730 L1052 732 L1052 735 L1052 738"/>
<path stroke="#1a2c98" d="M1073 712 L1078 712 L1082 710 L1087 710"/>
<path stroke="#1a46b8" d="M1081 733 L1084 730 L1086 727 L1089 725"/>
<path stroke="#1a46b8" d="M1094 727 L1098 730 L1101 734 L1105 737"/>
<path stroke="#1a46b8" d="M1134 700 L1133 697 L1133 695 L1134 692"/>
<path stroke="#1a2c98" d="M1067 754 L1072 755 L1076 756 L1080 757"/>
<path stroke="#1a2c98" d="M1075 773 L1078 773 L1081 772 L1083 770"/>
<path stroke="#1a2c98" d="M1105 734 L1110 736 L1116 737 L1121 736"/>
<path stroke="#1458d0" d="M1105 586 L1103 588 L1102 591 L1100 593"/>
<path stroke="#1458d0" d="M1125 588 L1125 582 L1126 576 L1126 570"/>
<path stroke="#1458d0" d="M1053 575 L1054 580 L1056 584 L1058 588"/>
<path stroke="#1458d0" d="M1043 652 L1044 654 L1046 656 L1047 658"/>
<path stroke="#1458d0" d="M1080 647 L1082 641 L1085 637 L1087 632"/>
<path stroke="#1458d0" d="M1112 633 L1117 634 L1122 633 L1126 633"/>
<path stroke="#1a2c98" d="M1089 716 L1087 721 L1083 726 L1078 729"/>
<path stroke="#1a46b8" d="M1175 691 L1177 686 L1178 681 L1179 676"/>
<path stroke="#1a46b8" d="M1197 693 L1201 690 L1206 688 L1211 687"/>
<path stroke="#1a46b8" d="M1237 679 L1238 675 L1241 672 L1243 668"/>
<path stroke="#1a46b8" d="M1253 667 L1253 664 L1254 660 L1255 656"/>
<path stroke="#1a46b8" d="M1269 653 L1273 656 L1277 658 L1280 661"/>
<path stroke="#1458d0" d="M1144 598 L1146 594 L1148 589 L1149 585"/>
<path stroke="#1458d0" d="M1151 595 L1152 591 L1153 587 L1153 583"/>
<path stroke="#1458d0" d="M1165 610 L1161 612 L1158 615 L1154 617"/>
<path stroke="#1458d0" d="M1163 634 L1168 636 L1174 637 L1179 640"/>
<path stroke="#1458d0" d="M1208 620 L1204 625 L1200 629 L1197 634"/>
<path stroke="#1a3aa8" d="M1285 609 L1285 613 L1285 616 L1286 620"/>
<path stroke="#1a3aa8" d="M1360 642 L1364 646 L1368 649 L1372 653"/>
<path stroke="#1458d0" d="M1402 723 L1405 724 L1407 727 L1409 729"/>
<path stroke="#1a3aa8" d="M1316 613 L1310 615 L1304 616 L1298 614"/>
<path stroke="#1a3aa8" d="M1417 580 L1419 580 L1420 578 L1422 576"/>
<path stroke="#1a3aa8" d="M1434 567 L1434 564 L1433 560 L1431 557"/>
<path stroke="#1a2c98" d="M1403 641 L1409 641 L1415 639 L1421 639"/>
<path stroke="#1a2c98" d="M1199 711 L1200 718 L1199 724 L1196 730"/>
<path stroke="#1a2c98" d="M1191 732 L1185 733 L1180 735 L1175 737"/>
<path stroke="#1a2c98" d="M1184 766 L1180 767 L1177 767 L1173 766"/>
<path stroke="#1a2c98" d="M1211 725 L1210 730 L1208 735 L1206 740"/>
<path stroke="#1a2c98" d="M1217 737 L1215 742 L1214 748 L1214 753"/>
<path stroke="#1a2c98" d="M1188 769 L1189 772 L1189 775 L1190 778"/>
<path stroke="#1a2c98" d="M1136 720 L1141 724 L1147 727 L1153 730"/>
<path stroke="#1a2c98" d="M1148 744 L1150 744 L1152 743 L1154 743"/>
<path stroke="#1a3aa8" d="M1274 553 L1275 549 L1278 546 L1280 542"/>
<path stroke="#1a2c98" d="M1281 593 L1278 597 L1274 601 L1272 605"/>
<path stroke="#1a2c98" d="M1285 606 L1288 606 L1290 606 L1293 607"/>
<path stroke="#1458d0" d="M1360 756 L1358 758 L1355 761 L1354 763"/>
<path stroke="#1458d0" d="M1397 819 L1399 821 L1401 823 L1403 824"/>
<path stroke="#1a46b8" d="M1666 552 L1664 556 L1661 561 L1658 565"/>
<path stroke="#1a46b8" d="M1651 561 L1651 567 L1651 573 L1654 579"/>
<path stroke="#1a46b8" d="M1636 566 L1636 569 L1635 571 L1635 574"/>
<path stroke="#1a46b8" d="M1613 575 L1614 579 L1615 584 L1616 587"/>
<path stroke="#1a46b8" d="M1607 592 L1603 597 L1600 602 L1596 607"/>
<path stroke="#1a46b8" d="M1582 616 L1583 622 L1583 628 L1582 634"/>
<path stroke="#1a2c98" d="M1631 580 L1632 586 L1633 592 L1634 598"/>
<path stroke="#1a2c98" d="M1601 602 L1600 607 L1600 613 L1601 618"/>
<path stroke="#1a46b8" d="M1424 571 L1426 568 L1426 566 L1428 563"/>
<path stroke="#1a46b8" d="M1446 630 L1448 625 L1450 620 L1453 615"/>
<path stroke="#1a46b8" d="M1478 618 L1481 624 L1484 629 L1488 634"/>
<path stroke="#1a46b8" d="M1500 592 L1499 596 L1498 599 L1496 602"/>
<path stroke="#1a46b8" d="M1551 576 L1554 577 L1558 578 L1562 576"/>
<path stroke="#1a3aa8" d="M1524 643 L1529 647 L1534 650 L1540 654"/>
<path stroke="#1a2c98" d="M1488 618 L1489 620 L1489 623 L1489 625"/>
<path stroke="#1a2c98" d="M1434 674 L1431 677 L1427 679 L1425 683"/>
<path stroke="#1a2c98" d="M1431 689 L1433 693 L1435 697 L1434 702"/>
<path stroke="#1a46b8" d="M1613 703 L1612 706 L1611 708 L1609 709"/>
<path stroke="#1a2c98" d="M1690 618 L1685 614 L1681 609 L1675 605"/>
<path stroke="#1a2c98" d="M1537 595 L1535 599 L1533 602 L1529 604"/>
</g>
<g fill="none" stroke-linejoin="round" stroke-linecap="round">
<path d="M1005.9 363.6 L1004.5 374.4 L1011.3 378.5 L1014.0 383.9 L1008.6 389.3 L1005.3 398.8" stroke="#1458d0" stroke-width="2.99"/>
<path d="M1016.7 363.6 L1028.9 363.6 L1024.9 370.4 L1016.7 371.7" stroke="#1458d0" stroke-width="2.30"/>
<path d="M1034.3 363.6 L1043.8 370.4 L1049.3 378.5 L1056.0 392.1" stroke="#1458d0" stroke-width="2.30"/>
<path d="M1004.5 430.0 L1011.3 421.9 L1024.9 417.8 L1043.8 416.5 L1060.1 413.7 L1075.0 411.0" stroke="#1458d0" stroke-width="2.76"/>
<path d="M1075.0 413.7 L1052.0 424.6 L1035.7 432.7 L1034.3 443.6 L1024.9 457.1 L1016.7 465.3 L1003.2 478.8 L995.0 484.3 L986.9 492.4 L970.6 497.8 L963.8 500.5" stroke="#1458d0" stroke-width="2.99"/>
<path d="M962.5 454.4 L976.0 457.1 L988.2 450.4" stroke="#1458d0" stroke-width="2.53"/>
<path d="M921.8 524.9 L927.2 523.6 L948.9 508.7" stroke="#1458d0" stroke-width="2.76"/>
<path d="M924.5 524.9 L928.6 541.2 L921.8 549.4" stroke="#1458d0" stroke-width="2.53"/>
<path d="M962.5 534.4 L976.0 530.4 L992.3 522.2 L1008.6 519.5 L1019.4 523.6" stroke="#1458d0" stroke-width="2.53"/>
<path d="M1084.5 421.9 L1095.4 416.5 L1106.2 411.0 L1111.6 405.6 L1122.5 402.9 L1135.0 400.2" stroke="#1458d0" stroke-width="2.53"/>
<path d="M1111.6 408.3 L1114.4 432.7" stroke="#1458d0" stroke-width="2.30"/>
<path d="M1087.2 476.1 L1098.1 472.1 L1108.9 468.0 L1117.1 462.6 L1135.0 454.4" stroke="#1458d0" stroke-width="2.53"/>
<path d="M1076.4 492.4 L1087.2 497.8 L1092.7 495.1 L1089.9 506.0 L1085.9 514.1 L1083.2 535.8 L1087.2 549.4" stroke="#1458d0" stroke-width="2.76"/>
<path d="M1126.6 511.4 L1127.9 524.9 L1132.0 549.4" stroke="#1458d0" stroke-width="2.76"/>
<path d="M1035.7 549.4 L1049.3 535.8 L1052.0 527.7" stroke="#1458d0" stroke-width="2.53"/>
<path d="M1140.4 335.1 L1151.3 351.4 L1155.3 359.5 L1170.3 363.6 L1186.5 356.8 L1202.8 351.4 L1224.5 351.4 L1243.5 351.4 L1262.5 345.9 L1276.0 340.5 L1286.9 340.5 L1297.7 329.7 L1308.6 310.7 L1316.7 291.7 L1308.6 278.1 L1301.8 276.8" stroke="#1458d0" stroke-width="3.22"/>
<path d="M1155.3 359.5 L1154.0 373.1 L1145.8 389.3 L1135.0 397.5" stroke="#1458d0" stroke-width="2.76"/>
<path d="M1135.0 457.1 L1151.3 446.3 L1170.3 443.6 L1189.2 435.4 L1205.5 421.9 L1216.4 408.3 L1229.9 405.6 L1243.5 400.2 L1257.1 397.5 L1262.5 389.3 L1267.9 378.5 L1270.6 362.2 L1276.0 351.4 L1273.3 343.2" stroke="#1458d0" stroke-width="3.22"/>
<path d="M1270.6 378.5 L1281.5 389.3 L1295.0 400.2 L1297.7 416.5 L1300.4 432.7 L1305.9 454.4 L1311.3 465.3 L1324.9 476.1 L1346.6 484.3" stroke="#1458d0" stroke-width="2.76"/>
<path d="M1281.5 354.1 L1303.2 359.5 L1319.4 359.5 L1322.1 373.1 L1330.3 394.8 L1341.1 408.3 L1360.1 416.5 L1373.7 421.9 L1381.8 432.7 L1384.5 446.3 L1387.2 459.9 L1392.7 476.1 L1400.8 487.0" stroke="#1458d0" stroke-width="2.76"/>
<path d="M1335.7 348.7 L1352.0 351.4 L1373.7 351.4 L1389.9 356.8 L1398.1 373.1 L1406.2 389.3" stroke="#1458d0" stroke-width="2.76"/>
<path d="M1341.1 343.2 L1338.4 324.2 L1352.0 321.5 L1371.0 324.2 L1379.1 313.4 L1381.8 297.1 L1383.2 280.8" stroke="#1458d0" stroke-width="2.99"/>
<path d="M1140.4 478.8 L1151.3 492.4 L1164.8 506.0 L1178.4 514.1 L1183.8 527.7 L1189.2 549.4" stroke="#1458d0" stroke-width="2.53"/>
<path d="M1238.1 495.1 L1254.3 495.1 L1270.6 492.4 L1286.9 487.0 L1295.0 476.1 L1300.4 465.3" stroke="#1458d0" stroke-width="2.76"/>
<path d="M1238.1 495.1 L1235.4 514.1 L1229.9 530.4 L1224.5 549.4" stroke="#1458d0" stroke-width="2.53"/>
<path d="M1422.5 386.6 L1426.6 411.0 L1427.9 432.7 L1425.2 459.9 L1419.8 476.1 L1422.5 495.1 L1430.6 514.1" stroke="#1458d0" stroke-width="2.76"/>
<path d="M1175.7 359.5 L1178.4 375.8 L1197.4 383.9 L1216.4 381.2" stroke="#1458d0" stroke-width="2.53"/>
<path d="M1189.2 335.1 L1192.0 351.4" stroke="#1458d0" stroke-width="2.30"/>
<path d="M1224.5 335.1 L1227.2 356.8 L1243.5 351.4" stroke="#1458d0" stroke-width="2.53"/>
<path d="M1379.1 392.1 L1389.9 411.0" stroke="#1458d0" stroke-width="2.30"/>
<path d="M1528.5 383.9 L1523.1 405.6 L1512.2 424.6 L1504.1 438.2 L1497.3 457.1 L1500.0 476.1 L1495.9 492.4 L1501.4 506.0 L1508.1 516.8 L1506.8 549.4" stroke="#1458d0" stroke-width="3.45"/>
<path d="M1512.2 430.0 L1517.6 440.9 L1528.5 454.4 L1539.3 465.3 L1550.2 470.7" stroke="#1a3aa8" stroke-width="2.53"/>
<path d="M1420.0 386.6 L1436.3 383.9 L1452.5 378.5 L1471.5 383.9 L1482.4 405.6" stroke="#1458d0" stroke-width="2.76"/>
<path d="M1422.7 392.1 L1428.1 421.9 L1436.3 438.2 L1444.4 454.4 L1455.3 457.1" stroke="#1458d0" stroke-width="2.76"/>
<path d="M1420.0 354.1 L1436.3 362.2 L1447.1 373.1 L1449.8 386.6" stroke="#1458d0" stroke-width="2.76"/>
<path d="M1493.2 310.7 L1498.7 332.4 L1506.8 337.8" stroke="#1458d0" stroke-width="2.53"/>
<path d="M1544.8 340.5 L1539.3 359.5" stroke="#1458d0" stroke-width="2.53"/>
<path d="M1458.0 516.8 L1474.2 514.1 L1479.7 530.4 L1506.8 516.8 L1536.6 514.1 L1544.8 519.5" stroke="#1a2c98" stroke-width="2.30"/>
<path d="M1571.9 487.0 L1582.7 500.5 L1590.9 508.7" stroke="#1458d0" stroke-width="2.53"/>
<path d="M1634.3 514.1 L1650.5 500.5 L1672.2 489.7" stroke="#1458d0" stroke-width="2.53"/>
<path d="M1574.6 524.9 L1596.3 527.7 L1609.9 530.4" stroke="#2a2a90" stroke-width="2.30"/>
<path d="M1536.6 527.7 L1555.6 535.8 L1569.2 541.2" stroke="#1458d0" stroke-width="2.53"/>
<path d="M1674.9 519.5 L1685.8 527.7 L1680.4 541.2 L1672.2 549.4" stroke="#1458d0" stroke-width="2.53"/>
<path d="M1509.5 378.5 L1523.1 383.9 L1533.9 397.5 L1542.1 402.9" stroke="#1458d0" stroke-width="2.53"/>
<path d="M1460.7 392.1 L1474.2 411.0 L1487.8 424.6" stroke="#1458d0" stroke-width="2.30"/>
<path d="M840.4 655.8 L851.3 642.2 L864.8 634.1 L870.3 642.2 L878.4 647.6" stroke="#1458d0" stroke-width="2.99"/>
<path d="M840.4 710.0 L845.8 696.5 L856.7 680.2 L870.3 663.9" stroke="#1458d0" stroke-width="2.53"/>
<path d="M897.4 582.5 L910.9 577.1 L924.5 566.3" stroke="#1458d0" stroke-width="2.99"/>
<path d="M927.2 585.3 L943.5 579.8 L959.8 577.1 L967.9 571.7 L978.7 558.1" stroke="#1458d0" stroke-width="2.76"/>
<path d="M959.8 598.8 L970.6 601.5 L978.7 609.7 L984.2 620.5" stroke="#1458d0" stroke-width="2.76"/>
<path d="M954.3 612.4 L959.8 628.7 L959.8 642.2" stroke="#1458d0" stroke-width="2.76"/>
<path d="M1003.2 550.0 L1011.3 577.1 L1008.6 604.2 L1014.0 631.4" stroke="#1458d0" stroke-width="2.76"/>
<path d="M1019.4 558.1 L1024.9 577.1" stroke="#1458d0" stroke-width="2.53"/>
<path d="M924.5 634.1 L932.6 642.2 L938.1 650.4" stroke="#1458d0" stroke-width="2.76"/>
<path d="M856.7 720.9 L867.5 723.6 L883.8 720.9 L902.8 723.6 L921.8 729.0" stroke="#1458d0" stroke-width="3.45"/>
<path d="M862.1 712.7 L859.4 726.3 L854.0 737.1" stroke="#1458d0" stroke-width="2.76"/>
<path d="M1024.9 674.8 L1035.7 691.0 L1046.6 712.7 L1054.7 734.4 L1057.4 745.3 L1065.5 756.1" stroke="#1a3aa8" stroke-width="2.76"/>
<path d="M1030.3 663.9 L1041.1 661.2 L1052.0 663.9" stroke="#1a2c98" stroke-width="2.30"/>
<path d="M1068.3 707.3 L1079.1 718.2 L1089.9 734.4" stroke="#1a2c98" stroke-width="2.30"/>
<path d="M1052.0 739.9 L1071.0 737.1 L1089.9 729.0 L1106.2 718.2 L1122.5 707.3 L1135.0 699.2" stroke="#1a46b8" stroke-width="3.22"/>
<path d="M1065.5 750.7 L1073.7 767.0 L1079.1 786.0 L1084.5 794.1" stroke="#1a2c98" stroke-width="2.53"/>
<path d="M1100.8 707.3 L1106.2 739.9 L1117.1 767.0" stroke="#1a2c98" stroke-width="2.30"/>
<path d="M1089.9 691.0 L1103.5 696.5" stroke="#1a2c98" stroke-width="2.30"/>
<path d="M1100.8 571.7 L1106.2 590.7 L1117.1 596.1 L1127.9 585.3" stroke="#1458d0" stroke-width="2.76"/>
<path d="M1046.6 577.1 L1065.5 571.7 L1073.7 579.8 L1071.0 604.2 L1062.8 617.8 L1054.7 631.4" stroke="#1458d0" stroke-width="2.76"/>
<path d="M1035.7 653.1 L1052.0 650.4 L1073.7 647.6 L1089.9 644.9" stroke="#1458d0" stroke-width="2.53"/>
<path d="M1106.2 612.4 L1111.6 631.4 L1119.8 647.6" stroke="#1458d0" stroke-width="2.53"/>
<path d="M1084.5 701.9 L1089.9 718.2 L1100.8 723.6" stroke="#1a2c98" stroke-width="2.07"/>
<path d="M1135.0 701.9 L1151.3 691.0 L1175.7 691.0 L1205.5 693.7 L1227.2 685.6 L1243.5 674.8 L1257.1 663.9 L1276.0 647.6 L1292.3 631.4 L1297.7 625.9" stroke="#1a46b8" stroke-width="3.45"/>
<path d="M1135.0 601.5 L1148.6 596.1 L1162.1 590.7 L1164.8 609.7 L1162.1 628.7 L1164.8 644.9 L1173.0 653.1" stroke="#1458d0" stroke-width="2.76"/>
<path d="M1202.8 593.4 L1205.5 604.2 L1208.2 620.5 L1210.9 631.4" stroke="#1458d0" stroke-width="2.53"/>
<path d="M1281.5 577.1 L1286.9 604.2 L1281.5 620.5" stroke="#1a3aa8" stroke-width="2.53"/>
<path d="M1292.3 650.4 L1314.0 650.4 L1324.9 658.5 L1335.7 666.6 L1338.4 680.2 L1335.7 693.7" stroke="#1a2c98" stroke-width="2.53"/>
<path d="M1330.3 628.7 L1352.0 636.8 L1365.5 644.9 L1379.1 658.5 L1389.9 669.3 L1400.8 677.5 L1406.2 691.0 L1411.6 707.3 L1417.1 712.7" stroke="#1a3aa8" stroke-width="2.76"/>
<path d="M1384.5 729.0 L1392.7 726.3 L1406.2 720.9 L1417.1 715.4 L1427.9 712.7 L1435.0 710.0" stroke="#1458d0" stroke-width="2.76"/>
<path d="M1341.1 582.5 L1335.7 598.8 L1324.9 604.2 L1314.0 615.1" stroke="#1a3aa8" stroke-width="2.53"/>
<path d="M1346.6 598.8 L1365.5 596.1 L1384.5 596.1 L1406.2 590.7 L1419.8 577.1 L1435.0 566.3" stroke="#1a3aa8" stroke-width="2.76"/>
<path d="M1398.1 620.5 L1403.5 642.2 L1411.6 663.9 L1411.6 685.6" stroke="#1a2c98" stroke-width="2.53"/>
<path d="M1202.8 696.5 L1197.4 718.2 L1186.5 739.9 L1183.8 767.0 L1192.0 769.7" stroke="#1a2c98" stroke-width="2.53"/>
<path d="M1205.5 712.7 L1216.4 734.4 L1224.5 761.6" stroke="#1a2c98" stroke-width="2.53"/>
<path d="M1135.0 767.0 L1148.6 758.8 L1162.1 767.0 L1175.7 772.4 L1194.7 767.0" stroke="#1a2c98" stroke-width="2.53"/>
<path d="M1135.0 718.2 L1145.8 734.4 L1151.3 758.8" stroke="#1a2c98" stroke-width="2.30"/>
<path d="M1259.8 555.4 L1276.0 552.7 L1286.9 566.3 L1297.7 560.8" stroke="#1a3aa8" stroke-width="2.30"/>
<path d="M1270.6 582.5 L1281.5 593.4 L1286.9 612.4" stroke="#1a2c98" stroke-width="2.30"/>
<path d="M1346.6 739.9 L1360.1 756.1 L1365.5 780.5" stroke="#1458d0" stroke-width="2.53"/>
<path d="M1379.1 813.1 L1392.7 821.2 L1406.2 815.8" stroke="#1458d0" stroke-width="2.99"/>
<path d="M1669.5 550.0 L1653.3 560.8 L1626.1 569.0 L1609.9 577.1 L1607.1 593.4 L1593.6 604.2 L1577.3 620.5 L1566.5 636.8 L1555.6 650.4 L1544.8 661.2" stroke="#1a46b8" stroke-width="3.45"/>
<path d="M1645.1 574.4 L1631.6 579.8 L1615.3 593.4 L1596.3 604.2 L1580.0 615.1" stroke="#1a2c98" stroke-width="2.30"/>
<path d="M1420.0 571.7 L1441.7 566.3 L1474.2 558.1 L1493.2 551.4" stroke="#1a46b8" stroke-width="2.99"/>
<path d="M1482.4 574.4 L1474.2 579.8 L1468.8 596.1 L1460.7 612.4 L1433.6 620.5" stroke="#1a3aa8" stroke-width="2.76"/>
<path d="M1420.0 642.2 L1441.7 631.4 L1460.7 623.2 L1479.7 617.8" stroke="#1a46b8" stroke-width="2.99"/>
<path d="M1493.2 588.0 L1509.5 598.8 L1528.5 597.5 L1539.3 590.7 L1547.5 579.8 L1558.3 566.3 L1569.2 550.0" stroke="#1a46b8" stroke-width="2.99"/>
<path d="M1509.5 598.8 L1514.9 615.1 L1520.4 631.4 L1525.8 650.4 L1528.5 658.5" stroke="#1a3aa8" stroke-width="2.53"/>
<path d="M1490.5 590.7 L1487.8 617.8 L1482.4 631.4" stroke="#1a2c98" stroke-width="2.53"/>
<path d="M1447.1 658.5 L1436.3 663.9 L1430.8 685.6 L1428.1 712.7 L1420.0 715.4" stroke="#1a2c98" stroke-width="2.53"/>
<path d="M1447.1 658.5 L1449.8 685.6 L1441.7 712.7 L1439.0 718.2" stroke="#1a2c98" stroke-width="2.30"/>
<path d="M1504.1 682.9 L1514.9 677.5 L1528.5 674.8 L1536.6 677.5" stroke="#1a2c98" stroke-width="2.53"/>
<path d="M1582.7 655.8 L1596.3 669.3 L1604.4 685.6 L1615.3 707.3 L1623.4 715.4" stroke="#1a46b8" stroke-width="2.76"/>
<path d="M1683.1 625.9 L1696.6 609.7 L1707.5 588.0" stroke="#1a2c98" stroke-width="2.30"/>
<path d="M1533.9 590.7 L1544.8 604.2" stroke="#1a2c98" stroke-width="2.76"/>
</g>
<polygon points="889.2,718.2 897.4,691.0 913.7,666.6 932.6,650.4 959.8,642.2 986.9,644.9 1011.3,650.4 1030.3,661.2 1030.3,669.3 1011.3,669.3 986.9,666.6 959.8,666.6 940.8,677.5 924.5,685.6 910.9,701.9 902.8,718.2" fill="#f4fffc" stroke="#40e0c8" stroke-width="1.6" opacity="0.95"/>
<polygon points="1415.2,289.1 1422.4,287.6 1442.8,303.6 1457.3,310.0 1483.5,325.4 1506.7,339.1 1527.1,350.7 1545.1,366.1 1537.3,376.9 1512.6,376.9 1493.7,365.2 1476.2,351.6 1454.4,334.1 1437.0,318.1 1416.6,297.8" fill="#f4fffc" stroke="#40e0c8" stroke-width="1.6" opacity="0.95"/>
</svg>
<!-- <div class="a" style="left:0px;top:1015px;width:99px;height:17px;border-left:1px solid #a0a0a0;border-top:1px solid #a0a0a0;border-right:1px solid #fff"></div><div class="a" style="left:6px;top:1016px;white-space:nowrap">MapsID: 3945</div>
<div class="a" style="left:101px;top:1015px;width:78px;height:17px;border-left:1px solid #a0a0a0;border-top:1px solid #a0a0a0;border-right:1px solid #fff"></div><div class="a" style="left:104px;top:1016px;white-space:nowrap">png</div>
<div class="a" style="left:181px;top:1015px;width:98px;height:17px;border-left:1px solid #a0a0a0;border-top:1px solid #a0a0a0;border-right:1px solid #fff"></div><div class="a" style="left:184px;top:1016px;white-space:nowrap">MinZoom: 8</div>
<div class="a" style="left:281px;top:1015px;width:98px;height:17px;border-left:1px solid #a0a0a0;border-top:1px solid #a0a0a0;border-right:1px solid #fff"></div><div class="a" style="left:284px;top:1016px;white-space:nowrap">MaxZoom: 18</div>
<div class="a" style="left:381px;top:1015px;width:98px;height:17px;border-left:1px solid #a0a0a0;border-top:1px solid #a0a0a0;border-right:1px solid #fff"></div><div class="a" style="left:384px;top:1016px;white-space:nowrap">TileSize: 256</div>
<div class="a" style="left:481px;top:1015px;width:98px;height:17px;border-left:1px solid #a0a0a0;border-top:1px solid #a0a0a0;border-right:1px solid #fff"></div><div class="a" style="left:484px;top:1016px;white-space:nowrap">EPSG:3857</div>
<div class="a" style="left:581px;top:1015px;width:1339px;height:17px;border-left:1px solid #a0a0a0;border-top:1px solid #a0a0a0;border-right:1px solid #fff"></div><div class="a" style="left:584px;top:1016px;white-space:nowrap">Longitude=8.437500, Latitude=47.405785, tile=8/134/89.png</div> BAR -->
<div class="a" style="left:0;top:1014px;width:1920px;height:18px;background:#f0f0f0"></div>
<div class="a" style="left:0px;top:1015px;width:99px;height:17px;border-left:1px solid #a0a0a0;border-top:1px solid #a0a0a0;border-right:1px solid #fff"></div><div class="a" style="left:6px;top:1016px;white-space:nowrap">MapsID: 3945</div>
<div class="a" style="left:101px;top:1015px;width:78px;height:17px;border-left:1px solid #a0a0a0;border-top:1px solid #a0a0a0;border-right:1px solid #fff"></div><div class="a" style="left:104px;top:1016px;white-space:nowrap">png</div>
<div class="a" style="left:181px;top:1015px;width:98px;height:17px;border-left:1px solid #a0a0a0;border-top:1px solid #a0a0a0;border-right:1px solid #fff"></div><div class="a" style="left:184px;top:1016px;white-space:nowrap">MinZoom: 8</div>
<div class="a" style="left:281px;top:1015px;width:98px;height:17px;border-left:1px solid #a0a0a0;border-top:1px solid #a0a0a0;border-right:1px solid #fff"></div><div class="a" style="left:284px;top:1016px;white-space:nowrap">MaxZoom: 18</div>
<div class="a" style="left:381px;top:1015px;width:98px;height:17px;border-left:1px solid #a0a0a0;border-top:1px solid #a0a0a0;border-right:1px solid #fff"></div><div class="a" style="left:384px;top:1016px;white-space:nowrap">TileSize: 256</div>
<div class="a" style="left:481px;top:1015px;width:98px;height:17px;border-left:1px solid #a0a0a0;border-top:1px solid #a0a0a0;border-right:1px solid #fff"></div><div class="a" style="left:484px;top:1016px;white-space:nowrap">EPSG:3857</div>
<div class="a" style="left:581px;top:1015px;width:1339px;height:17px;border-left:1px solid #a0a0a0;border-top:1px solid #a0a0a0;border-right:1px solid #fff"></div><div class="a" style="left:584px;top:1016px;white-space:nowrap">Longitude=8.437500, Latitude=47.405785, tile=8/134/89.png</div>
</body></html>
